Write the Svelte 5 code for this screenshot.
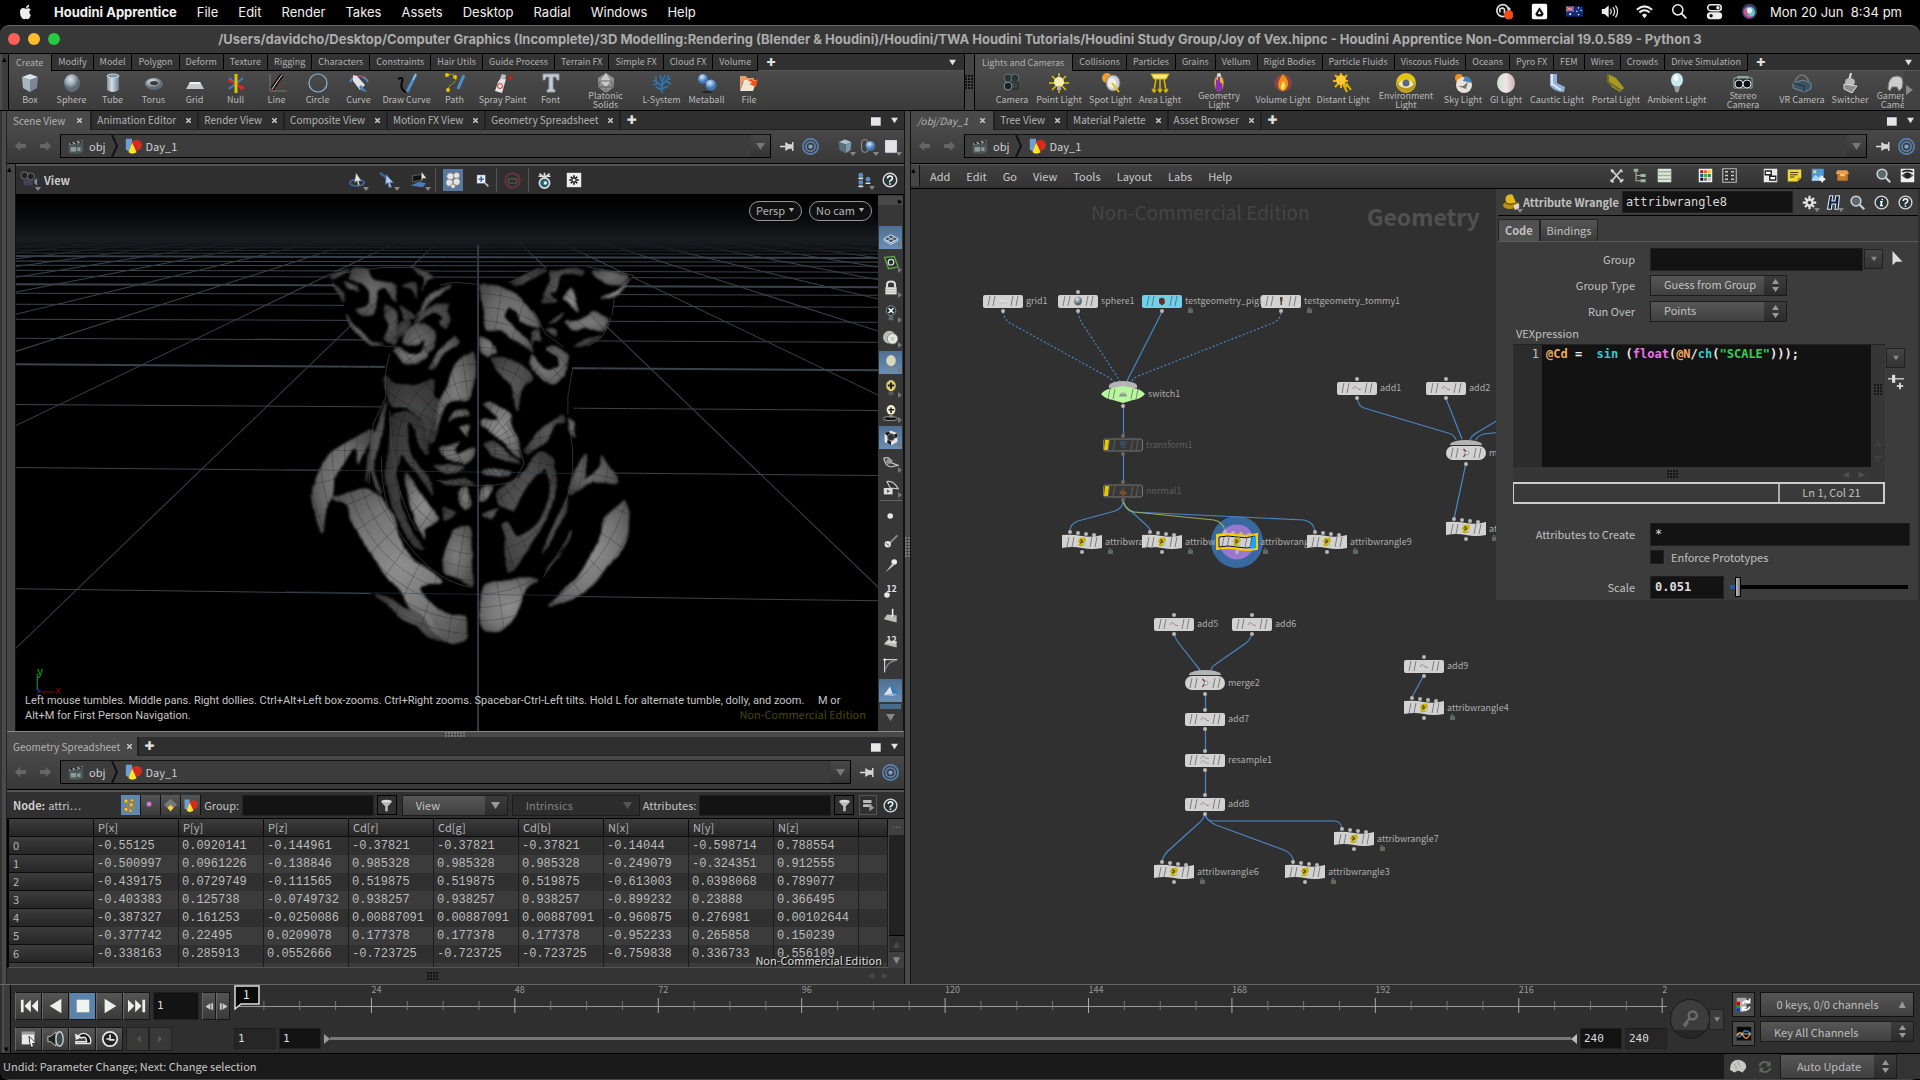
<script>
  const menus = ['File', 'Edit', 'Render', 'Takes', 'Assets', 'Desktop', 'Radial', 'Windows', 'Help']
  const networkMenus = ['Add', 'Edit', 'Go', 'View', 'Tools', 'Layout', 'Labs', 'Help']

  const shelfTabs = ['Create', 'Modify', 'Model', 'Polygon', 'Deform', 'Texture', 'Rigging', 'Characters', 'Constraints', 'Hair Utils', 'Guide Process', 'Terrain FX', 'Simple FX', 'Cloud FX', 'Volume']
  const lightTabs = ['Lights and Cameras', 'Collisions', 'Particles', 'Grains', 'Vellum', 'Rigid Bodies', 'Particle Fluids', 'Viscous Fluids', 'Oceans', 'Pyro FX', 'FEM', 'Wires', 'Crowds', 'Drive Simulation']

  // [label, icon, cell width]
  const shelfTools = [
    ['Box', 'box', 42], ['Sphere', 'sphere', 41], ['Tube', 'tube', 41], ['Torus', 'torus', 41],
    ['Grid', 'grid', 41], ['Null', 'nul', 41], ['Line', 'line', 41], ['Circle', 'circle', 41],
    ['Curve', 'curve', 41], ['Draw Curve', 'draw', 55], ['Path', 'path', 41], ['Spray Paint', 'spray', 55],
    ['Font', 'font', 41], ['Platonic Solids', 'platonic', 69], ['L-System', 'lsystem', 43],
    ['Metaball', 'metaball', 47], ['File', 'file', 38]
  ]
  const lightTools = [
    ['Camera', 'camera', 46], ['Point Light', 'point', 48], ['Spot Light', 'spot', 55], ['Area Light', 'area', 44],
    ['Geometry Light', 'geolight', 74], ['Volume Light', 'fire', 54], ['Distant Light', 'sun', 66],
    ['Environment Light', 'env', 60], ['Sky Light', 'sky', 54], ['GI Light', 'gi', 32],
    ['Caustic Light', 'caustic', 70], ['Portal Light', 'portal', 48], ['Ambient Light', 'bulb', 74],
    ['Stereo Camera', 'stereo', 58], ['VR Camera', 'vr', 60], ['Switcher', 'switcher', 36], ['Gamepad Camera', 'gamepad', 58]
  ]
  const twoLine = ['platonic', 'geolight', 'env', 'stereo', 'gamepad']

  const sceneTabs = ['Scene View', 'Animation Editor', 'Render View', 'Composite View', 'Motion FX View', 'Geometry Spreadsheet']
  const netTabs = ['/obj/Day_1', 'Tree View', 'Material Palette', 'Asset Browser']

  const columns = ['P[x]', 'P[y]', 'P[z]', 'Cd[r]', 'Cd[g]', 'Cd[b]', 'N[x]', 'N[y]', 'N[z]']
  const rows = [
    ['-0.55125', '0.0920141', '-0.144961', '-0.37821', '-0.37821', '-0.37821', '-0.14044', '-0.598714', '0.788554'],
    ['-0.500997', '0.0961226', '-0.138846', '0.985328', '0.985328', '0.985328', '-0.249079', '-0.324351', '0.912555'],
    ['-0.439175', '0.0729749', '-0.111565', '0.519875', '0.519875', '0.519875', '-0.613003', '0.0398068', '0.789077'],
    ['-0.403383', '0.125738', '-0.0749732', '0.938257', '0.938257', '0.938257', '-0.899232', '0.23888', '0.366495'],
    ['-0.387327', '0.161253', '-0.0250086', '0.00887091', '0.00887091', '0.00887091', '-0.960875', '0.276981', '0.00102644'],
    ['-0.377742', '0.22495', '0.0209078', '0.177378', '0.177378', '0.177378', '-0.952233', '0.265858', '0.150239'],
    ['-0.338163', '0.285913', '0.0552666', '-0.723725', '-0.723725', '-0.723725', '-0.759838', '0.336733', '0.556109']
  ]

  const viewTools = [
    ['plane', true], ['reference', false], ['lock', false], ['nolight', false], ['ghost', false], ['bulbOff', true],
    ['bulbPlus', false], ['bulbShadow', false], ['checker', true], ['eye', false], ['eyeCam', false]
  ]
  const displayTools = [
    ['dot', false], ['normalDot', false], ['pointTrail', false], ['num', false],
    ['primNormal', false], ['primNum', false], ['hull', false], ['backface', true]
  ]

  // Node positions on the network canvas
  const nodes = [
    { name: 'grid1', x: 1003, y: 301, icon: 'grid', noIn: true },
    { name: 'sphere1', x: 1078, y: 301, icon: 'sphere' },
    { name: 'testgeometry_pighead1', x: 1162, y: 301, icon: 'pig', fill: '#6fd0ea', noIn: true, lock: true },
    { name: 'testgeometry_tommy1', x: 1281, y: 301, icon: 'man', noIn: true, lock: true },
    { name: 'switch1', x: 1123, y: 394, icon: 'switch', kind: 'switch' },
    { name: 'transform1', x: 1123, y: 445, icon: 'transform', kind: 'bypass' },
    { name: 'normal1', x: 1123, y: 491, icon: 'normal', kind: 'bypass' },
    { name: 'attribwrangle1', x: 1082, y: 542, kind: 'wrangle' },
    { name: 'attribwrangle5', x: 1162, y: 542, kind: 'wrangle' },
    { name: 'attribwrangle8', x: 1237, y: 542, kind: 'wrangle', selected: true },
    { name: 'attribwrangle9', x: 1327, y: 542, kind: 'wrangle' },
    { name: 'add1', x: 1357, y: 388, icon: 'wave' },
    { name: 'add2', x: 1446, y: 388, icon: 'wave' },
    { name: 'merge1', x: 1466, y: 453, kind: 'merge' },
    { name: 'attribwrangle2', x: 1466, y: 529, kind: 'wrangle' },
    { name: 'add5', x: 1174, y: 624, icon: 'wave' },
    { name: 'add6', x: 1252, y: 624, icon: 'wave' },
    { name: 'merge2', x: 1205, y: 683, kind: 'merge' },
    { name: 'add7', x: 1205, y: 719, icon: 'wave' },
    { name: 'resample1', x: 1205, y: 760, icon: 'waves' },
    { name: 'add8', x: 1205, y: 804, icon: 'wave' },
    { name: 'attribwrangle7', x: 1354, y: 839, kind: 'wrangle' },
    { name: 'attribwrangle6', x: 1174, y: 872, kind: 'wrangle' },
    { name: 'attribwrangle3', x: 1305, y: 872, kind: 'wrangle' },
    { name: 'add9', x: 1424, y: 666, icon: 'wave' },
    { name: 'attribwrangle4', x: 1424, y: 708, kind: 'wrangle' }
  ]

  const dottedWires = [
    'M1003 312Q1004 319 1010 323L1106 376Q1112 379 1114 382',
    'M1078 312Q1079 318 1082 323L1120 381',
    'M1281 313Q1280 320 1273 323L1138 376Q1132 379 1132 382'
  ]
  const wires = [
    'M1162 312L1127 381', 'M1123.5 407V435', 'M1123.5 455V481',
    'M1123 501Q1123 508 1115 511L1078 521Q1070 524 1070 531',
    'M1123 501Q1125 509 1132 512L1144 523Q1150 528 1151 532',
    'M1123 501Q1126 511 1134 512L1304 520Q1314 522 1315 532',
    'M1357 397Q1358 406 1364 408L1448 433Q1455 435 1456 440',
    'M1446 398Q1447 402 1449 406L1462 439',
    'M1510 413L1478 432Q1471 436 1470 440', 'M1510 431L1484 434Q1477 436 1476 440',
    'M1466 463L1454 519',
    'M1174 633Q1175 638 1178 642L1196 665Q1199 668 1200 671',
    'M1252 633Q1251 639 1246 643L1216 664Q1211 667 1211 671',
    'M1205.5 694V711', 'M1205.5 727V752', 'M1205.5 769V796',
    'M1205 813Q1206 821 1213 821H1334Q1341 821 1342 829',
    'M1205 813Q1206 821 1216 825L1284 850Q1292 853 1294 862',
    'M1205 813Q1204 819 1199 823L1168 851Q1163 856 1162 862',
    'M1424 675L1412 697'
  ]

  const horizon = [
    [393, 405], [272, 280], [209, 215], [169, 175, 2], [143, 147], [124, 127], [109, 112], [98, 100], [89, 92, 2],
    [81, 83], [75, 77], [70, 71], [66, 67], [61, 63, 2], [58, 59], [55, 56], [52, 53], [50, 50], [47, 48]
  ]
  const rays = Array.from({ length: 24 }, (_, i) => i + 1)

  // Shaded stripes of the head: [brightness, outline points]
  const patches = [
    [6, '155 55 205 60 215 85 275 95 290 110 285 160 262 110 240 120 225 190 190 198 165 175 205 165 210 125 180 100 150 85'],
    [5, '255 160 290 190 300 265 285 285 250 275 268 225 250 200'],
    [6, '138 182 160 225 205 272 255 288 215 288 165 250 145 215'],
    [4, '85 76 150 58 125 75 100 85'], [4, '95 90 130 120 136 155 118 125'],
    [5, '330 52 375 60 400 80 378 85 365 130 372 85 350 65'],
    [5, '135 90 170 110 172 128 145 115'], [4, '300 110 345 100 352 150 335 120'],
    [6, '348 200 375 150 410 118 460 96 450 110 395 150 360 190'],
    [5, '345 235 360 190 400 165 450 165 440 180 455 215 430 238 415 215 435 205 400 185 370 195'],
    [4, '290 160 330 185 352 205 320 215'], [4, '300 215 340 215 330 240 300 262'],
    [6, '330 240 345 225 375 215 400 240 402 290 380 312 345 322 370 295 375 265 355 285 310 275'],
    [7, '275 300 300 285 325 312 350 318 382 305 375 325 345 345 305 340'],
    [6, '380 355 420 295 465 262 485 275 470 292 435 305 405 350'],
    [7, '405 550 410 480 445 390 490 320 522 302 520 420 505 445 450 450 425 480'],
    [4, '256 370 290 400 350 400 395 380 405 440 440 450 420 510 405 580 390 570 360 500 320 470 270 465 255 410'],
    [4, '270 490 330 485 360 510 390 570 395 615 350 570 330 515 320 540 330 600 385 700 395 740 340 660 300 600 290 660 300 760 340 850 375 900 340 880 290 800 258 700 262 580'],
    [7, '215 530 150 570 90 610 55 660 38 710 38 750 50 805 70 850 75 790 105 740 110 670 130 640 170 585 180 650 215 560'],
    [9, '90 742 200 710 245 745 280 790 300 860 340 930 430 990 420 1000 360 1010 380 1050 450 1095 500 1090 500 1165 440 1180 380 1110 330 1060 250 960 170 850 140 760'],
    [5, '215 1030 330 1070 400 1090 445 1180 340 1125'],
    [5, '200 705 213 560 262 435 230 590 218 650 245 740 228 720 212 650'],
    [8, '315 660 350 710 385 770 425 805 375 840 375 870 350 820 325 740'],
    [7, '465 830 512 825 517 1010 470 980 420 960 440 880'],
    [6, '445 520 470 475 500 470 512 495 470 500'], [7, '478 530 510 520 505 560'],
    [7, '420 590 480 570 458 595 468 615 520 588 515 620 495 645 440 625'],
    [5, '395 650 450 640 500 655 440 672'], [4, '410 695 500 682 525 700 450 704'],
    [7, '480 715 500 705 520 760 495 780 475 755'], [4, '425 770 470 790 440 812'],
    [7, '540 105 590 105 650 130 690 170 725 230 690 225 660 210 650 180 620 165 605 200 640 230 680 270 700 310 640 270 600 235 560 240 545 170'],
    [7, '540 255 570 270 590 300 560 320 540 305'],
    [5, '570 320 610 310 700 385 665 410 650 490 635 400 590 350'],
    [7, '690 310 680 350 750 405 800 365 800 310 770 290 740 300 770 320 775 350 740 358'],
    [4, '630 95 700 60 740 60 650 110'],
    [5, '740 60 850 58 850 80 780 70 770 120 745 130 775 155 720 160 750 90'],
    [8, '785 145 815 112 842 188 810 165'], [6, '870 55 990 72 960 100 920 98 885 80'],
    [9, '895 150 950 112 990 80 940 142'], [7, '790 208 850 205 880 183 930 205 905 250 850 230 830 240'],
    [5, '745 225 792 185 772 215'], [5, '735 235 775 240 775 265'],
    [5, '690 240 712 230 725 275 700 262 688 290'], [4, '810 285 860 270 910 258 860 286'],
    [8, '548 455 575 450 635 490 635 525 655 570 670 630 600 570 570 535 545 525 545 508 600 508'],
    [5, '545 580 580 570 600 590 670 640 610 630 570 620'],
    [6, '545 650 630 665 620 685 550 672'], [7, '540 708 585 705 560 745 540 748'],
    [5, '675 600 710 550 745 515 790 490 795 520 760 520 740 570 690 612'],
    [6, '805 500 830 515 832 560 812 545'],
    [5, '590 720 660 680 720 600 765 620 770 690 745 790 700 870 640 960 615 968 615 870 600 825 625 815 650 860 710 825 735 770 750 690 740 650 700 680 660 740 640 785 600 765'],
    [6, '800 745 830 650 855 610 860 680 845 690 870 680 900 650 903 605 955 705 870 695'],
    [9, '970 740 985 790 985 860 890 1000 850 1030 730 1075 850 960 915 800'],
    [9, '540 1000 600 990 720 985 680 1020 655 1090 605 1145 540 1140'],
    [5, '726 980 780 910 812 832 812 858'], [5, '545 790 600 770 570 812'],
    [5, '800 740 795 790 745 890 720 915 770 810']
  ]

  // Closed outline with its corners rounded off
  function smooth(points) {
    const n = points.split(' ').map(Number)
    const p = []
    for (let i = 0; i < n.length; i += 2) p.push([n[i], n[i + 1]])
    const near = (a, b, t) => `${a[0] + (b[0] - a[0]) * t} ${a[1] + (b[1] - a[1]) * t}`
    let d = ''
    p.forEach((pt, i) => {
      const prev = p[(i + p.length - 1) % p.length]
      const next = p[(i + 1) % p.length]
      d += `${i ? 'L' : 'M'}${near(pt, prev, 0.25)}Q${pt[0]} ${pt[1]} ${near(pt, next, 0.25)}`
    })
    return d + 'Z'
  }

  const meshRings = [60, 110, 160, 210, 260, 310, 350, 390, 430, 470, 510, 550]
  const meshSpokes = Array.from({ length: 36 }, (_, i) => (i * Math.PI) / 18)

  const ticks = []
  for (let f = 6; f <= 240; f += 6) ticks.push(f)
  const framePos = (f) => `${(f - 1) * 0.417}%`

  const icons = {
    box: '<path d="M2 4l8-3 8 3-8 3z" fill="#dde5ec"/><path d="M2 4l8 3v12l-7-4z" fill="#a9b6c1"/><path d="M18 4l-8 3v12l7-4z" fill="#7b8893"/>',
    sphere: '<ellipse cx="10" cy="10" rx="8" ry="9" fill="url(#ball)"/>',
    tube: '<path d="M4 3v14q6 4 12 0V3z" fill="url(#tubeg)"/><ellipse cx="10" cy="3" rx="6" ry="2" fill="#7d97ab" stroke="#cfdae2"/>',
    torus: '<ellipse cx="10" cy="11" rx="9" ry="6" fill="url(#ball)"/><ellipse cx="10" cy="10" rx="4" ry="2" fill="#3a3a3a"/>',
    grid: '<path d="M5 9h10l4 7H1z" fill="#c3cad0"/><path d="M5 9h10l1 2H4z" fill="#eef1f3"/>',
    plane: '<path d="M10 6l9 5-9 5-9-5z" fill="#3f566b" stroke="#dfe6ea" stroke-width="1.2"/><path d="M5.500 8.500l9 5M14.500 8.500l-9 5M1 13l9 5 9-5" stroke="#dfe6ea" fill="none"/>',
    nul: '<path d="M3 5l14 11M17 5L3 16" stroke="#3b7fc4" stroke-width="2"/><path d="M2 7l16 8M18 15l-4 1" stroke="#d22" stroke-width="2"/><path d="M10 1v19" stroke="#d8c400" stroke-width="3"/>',
    line: '<path d="M3 1v17h17" stroke="#777" fill="none"/><path d="M5 16L15 2" stroke="#111" stroke-width="4"/><path d="M5 16L15 2" stroke="#ddd"/><path d="M8 6l8 11M3 19l5-5" stroke="#b22" stroke-dasharray="2 1"/>',
    circle: '<ellipse cx="10" cy="10" rx="9" ry="9" fill="none" stroke="#8fb3d9" stroke-width="1.2"/>',
    curve: '<path d="M1 9q3-6 9-6t9 6" stroke="#5a9ad8" stroke-width="1.5" fill="none"/><path d="M2 3h16" stroke="#b22"/><path d="M4 2l4 1 8 9-5 5-7-9z" fill="#dfe3e6"/><path d="M12 12l6 7-5-1-3-4z" fill="#4b80b5"/>',
    draw: '<path d="M1 6q6-3 4 3t2 9q2 2 5-2" stroke="#080808" stroke-width="2" fill="none"/><path d="M19 1l-8 16-1 2" stroke="#4f8fc8" stroke-width="3"/><path d="M19 1l-3 6" stroke="#bcd8ee"/>',
    path: '<path d="M1 2q10-2 10 3T4 13l-1 5" stroke="#c8a800" fill="none" stroke-dasharray="2 1"/><circle cx="2" cy="2" r="2" fill="#e8c600"/><circle cx="10" cy="4" r="2" fill="#e8c600"/><circle cx="3" cy="17" r="2" fill="#e8c600"/><path d="M19 2l-6 14" stroke="#4f8fc8" stroke-width="3"/>',
    spray: '<path d="M8 5l5 1-4 14-7-2 3-9z" fill="#e8e4e2"/><path d="M9 1l4 1-1 5-5-2z" fill="#bbb"/><circle cx="7" cy="13" r="2.5" fill="none" stroke="#c33"/><path d="M14 4l6-2-1 6z" fill="#b22"/>',
    font: '<path d="M2 1h16v6h-2l-1-3h-3v12l2 1v2H6v-2l2-1V4H5L4 7H2z" fill="#c3ccd5" stroke="#8e99a4"/>',
    platonic: '<path d="M10 0l8 5v9l-8 6-8-6V5z" fill="#8d8f8e"/><path d="M10 0l5 8-5 6-6-6z" fill="#c9cbca"/><path d="M10 14l8 0M10 14l-8 0M10 14v6M4 8L2 14M15 8l3 6M4 8h11" stroke="#60635f" fill="none"/>',
    lsystem: '<path d="M10 20V9M10 14L4 8M10 12l6-6M10 9L8 2M10 10l3-8M4 8L1 8M4 8L4 3M16 6h3M16 6l0-4M6 10L2 12M14 8l5 3M10 16l6-3M10 17l-6-3" stroke="#2d77bd" stroke-width="1.5" fill="none"/>',
    metaball: '<circle cx="6" cy="6" r="5" fill="url(#blue)"/><circle cx="14" cy="12" r="5.5" fill="url(#blue)"/><ellipse cx="10" cy="19" rx="5" ry="1" fill="#222"/>',
    file: '<path d="M1 3h6l1 2h7v3H4L1 18z" fill="#e8a064"/><path d="M5 7h13l-4 11H1z" fill="#f4e4d4"/><path d="M9 8q4-4 6 0l4-2-2 8-7-3 3-1q-1-2-4-2z" fill="#f05510"/>',
    camera: '<circle cx="6" cy="5" r="4" fill="#2a3236" stroke="#65757a"/><circle cx="13" cy="5" r="4" fill="#2a3236" stroke="#65757a"/><path d="M5 9h11v7H5z" fill="#39454a" stroke="#222"/><circle cx="6" cy="13" r="4" fill="#1b2225" stroke="#84949a"/>',
    point: '<path d="M10 0v20M0 10h20M3 3l14 14M17 3L3 17" stroke="#e0c200" stroke-width="1.5"/><circle cx="10" cy="9" r="5" fill="#f6f0b0"/><path d="M8 13h4v4H8z" fill="#aaa"/>',
    spot: '<circle cx="6" cy="5" r="5" fill="#f39a2c"/><ellipse cx="12" cy="10" rx="7" ry="8" fill="#cfcfcf" stroke="#777"/><ellipse cx="11" cy="10" rx="4" ry="5" fill="#eee"/><path d="M11 10l7 9" stroke="#e0c200" stroke-width="2"/>',
    area: '<path d="M1 1h18l-3 5H4z" fill="#f3e48a" stroke="#d7b400"/><path d="M6 6L4 18M10 6v13M14 6l2 12M2 16l2 3 2-2M8 16l2 3 2-3M14 17l2 2 2-3" stroke="#dcb800" fill="none" stroke-width="1.5"/>',
    geolight: '<ellipse cx="10" cy="10" rx="5" ry="8" fill="#9b8060"/><ellipse cx="10" cy="9" rx="4" ry="5" fill="#e8c020"/><path d="M10 1v18M8 8l4 3v5H8z" stroke="#8b2fb0" stroke-width="2" fill="#8b2fb0"/><circle cx="10" cy="2" r="2" fill="#ddd"/>',
    fire: '<circle cx="10" cy="10" r="9" fill="#b44" opacity=".5"/><path d="M10 1q6 6 5 11t-5 6q-5-1-5-6t5-11z" fill="#f28a1c"/><path d="M10 8q3 3 2 6t-2 3q-3-1-2-4z" fill="#fce45a"/>',
    sun: '<path d="M8 0v15M0 8h15M2 2l12 12M14 2L2 14" stroke="#f0b000" stroke-width="2"/><circle cx="8" cy="7" r="5" fill="#ffc933"/><path d="M10 11l4 8M13 10l5 7" stroke="#e0b400" stroke-width="2"/>',
    env: '<circle cx="10" cy="10" r="10" fill="#e3c613"/><path d="M1 9h18v6q-9 8-18 0z" fill="#b89c20"/><path d="M2 11q8-9 16 0-8 8-16 0z" fill="#efe9c8"/><circle cx="10" cy="10" r="3.5" fill="#5c6a74"/>',
    sky: '<circle cx="6" cy="5" r="4" fill="#f08f1c"/><circle cx="11" cy="12" r="8" fill="#e9e2da"/><path d="M12 3q5 0 7 7l-9-2z" fill="#4a80b8"/><path d="M5 13h5l5-4-2 7z" fill="#777"/>',
    gi: '<ellipse cx="10" cy="10" rx="9" ry="10" fill="url(#gig)"/>',
    caustic: '<path d="M3 1h7v9l8 4-1 5q-9 0-14-6z" fill="#8fb0dc"/><path d="M5 1v10l9 6" stroke="#dce8f6" stroke-width="2" fill="none"/>',
    portal: '<path d="M2 1l8 4 8 10-4 4-8-5-4-5z" fill="#a89a20"/><path d="M2 1v8l14 9" stroke="#6c6a2a" stroke-width="2" fill="none"/>',
    bulb: '<ellipse cx="10" cy="7" rx="6" ry="7" fill="#c6e8ee"/><path d="M7 13h6l-1 5q-2 3-4 0z" fill="#9a9a9a"/><ellipse cx="9" cy="5" rx="2" ry="3" fill="#fff"/>',
    stereo: '<path d="M1 5h18v10H1z" fill="#2b2f31" stroke="#9aa"/><circle cx="6" cy="11" r="4" fill="#0f1214" stroke="#dde"/><circle cx="14" cy="11" r="4" fill="#0f1214" stroke="#dde"/><path d="M4 3h12v2H4z" fill="#8a9"/>',
    vr: '<path d="M3 8q7-12 14 0" fill="none" stroke="#777" stroke-width="1.5"/><path d="M1 10l10-3 8 3v6l-7 3-11-4z" fill="#3c5567" stroke="#73899a"/><path d="M1 10l11 3v6" fill="none" stroke="#1d2b35"/>',
    switcher: '<path d="M11 0L9 8" stroke="#ddd" stroke-width="2"/><ellipse cx="10" cy="9" rx="5" ry="4" fill="#b9b9b9"/><path d="M4 11l13 2-5 7-8-4z" fill="#8e8e8e" stroke="#ddd"/>',
    gamepad: '<path d="M10 3q8 0 5 12l-3 3-2-4H5l-2 4-2-2Q1 3 10 3z" fill="#ccc" stroke="#777"/>',
    obj: '<path d="M2 7h16v10q-8 3-16 1z" fill="#4b5657"/><path d="M2 7l15-4v3L3 9z" fill="#8b9494"/><path d="M4 6l2 2M9 5l2 2M14 4l2 2" stroke="#222" stroke-width="2"/><path d="M4 11h6v5H4zM11 12l4-1v5l-4-1z" fill="#8c9a9a"/>',
    geo: '<path d="M2 2h7v13q-4 2-7-1z" fill="#6f9fd0"/><circle cx="14" cy="9" r="6" fill="#d22b1f"/><path d="M9 6l5 11q-5 3-9 0z" fill="#ffe32b"/>',
    left: '<path d="M1 10l8-7v4h8v6H9v4z" fill="#666"/>',
    right: '<path d="M19 10l-8-7v4H3v6h8v4z" fill="#666"/>',
    pin: '<path d="M0 10h7" stroke="#ddd" stroke-width="2"/><path d="M7 4v12l5-3h4V7h-4zM16 4v12h2V4z" fill="#d4d4d4"/>',
    target: '<circle cx="10" cy="10" r="9" fill="none" stroke="#5682b4" stroke-width="2"/><circle cx="10" cy="10" r="5.5" fill="none" stroke="#6a97c8" stroke-width="1.5"/><circle cx="10" cy="10" r="2.5" fill="#76a6de"/>',
    cube: '<path d="M2 5l8-3 8 3-7 3z" fill="#a8c4ce"/><path d="M2 5l9 3v11l-8-4z" fill="#58707c"/><path d="M18 5l-7 3v11l6-4z" fill="#7f99a4"/>',
    balls: '<rect x="2" y="2" width="8" height="16" rx="4" fill="none" stroke="#aaa"/><circle cx="13" cy="10" r="6" fill="url(#blue)"/>',
    square: '<path d="M2 2h16v17H2z" fill="#e3e3e6" stroke="#2b2b44"/>',
    window: '<path d="M3 1h15v4H3z" fill="#26263f"/><path d="M3 5h15v13H3z" fill="#e6e6e2"/>',
    viewcam: '<circle cx="5" cy="5" r="4" fill="#222" stroke="#778"/><circle cx="12" cy="6" r="4" fill="#222" stroke="#778"/><path d="M4 10h10v6H4z" fill="#445"/><path d="M16 10l3-2v8l-3-2z" fill="#889"/>',
    orbit: '<ellipse cx="10" cy="13" rx="8" ry="3.500" fill="none" stroke="#3f6ba5" stroke-width="1.800"/><path d="M9 2l6 9-3 0 1 5-2 0-1-5-3 2z" fill="#e4e4e4" stroke="#444" stroke-width=".5"/>',
    arrow: '<path d="M1 2l12 9" stroke="#3f6ba5" stroke-width="2.500"/><path d="M8 4l8 9-4 0 2 5-3 0-1-5-3 2z" fill="#b9cde6" stroke="#3f6ba5"/>',
    render: '<path d="M3 5l10-1v6l-10 2z" fill="#111" stroke="#666"/><path d="M1 16l9-4 8 2-4 4z" fill="#4a7cbb"/><path d="M13 1l5 7h-4l-1 4z" fill="#e4e4e4"/>',
    flower: '<g fill="#e4e4e4" stroke="#6a6a6a" stroke-width=".7"><circle cx="7" cy="6" r="4"/><circle cx="14" cy="5" r="3.5"/><circle cx="6" cy="13" r="4"/><circle cx="14" cy="12" r="4"/><circle cx="10" cy="17" r="2.5"/></g>',
    zoombox: '<path d="M1 1h14v14H1z" fill="#e8eef4" stroke="#223"/><path d="M4 8h8M8 4v8" stroke="#3566b0" stroke-width="2.500"/><path d="M14 14l5 5" stroke="#bbb" stroke-width="2.500"/>',
    stop: '<circle cx="10" cy="10" r="8.5" fill="none" stroke="#6a3436" stroke-width="2.5"/><path d="M5 8h10v5H5z" fill="none" stroke="#666"/>',
    compass: '<circle cx="10" cy="13" r="6" fill="#2a6470" stroke="#ddd" stroke-width="2"/><path d="M10 8V1M4 2l5 4M16 2l-5 4M3 5h14" stroke="#ddd" stroke-width="2"/><circle cx="11" cy="13" r="2" fill="#e8f4f8"/>',
    gearbox: '<path d="M1 1h18v18H1z" fill="#eee"/><path d="M10 4v12M4 10h12M6 6l8 8M14 6l-8 8" stroke="#111" stroke-width="2"/><circle cx="10" cy="10" r="2" fill="#eee"/>',
    people: '<g fill="#5a8cc4"><circle cx="6" cy="4" r="3"/><circle cx="6" cy="13" r="3"/><circle cx="15" cy="9" r="3"/></g><path d="M3 8h6M3 18h6M12 14h6" stroke="#ddd" stroke-width="2"/>',
    help: '<circle cx="10" cy="10" r="8.5" fill="#26363a" stroke="#d8d8d8" stroke-width="1.8"/><path d="M7 8q0-3 3-3t3 3q0 1-2 2.500t-1 2M10 14v2" stroke="#fff" stroke-width="2" fill="none"/>',
    info: '<circle cx="10" cy="10" r="8.500" fill="#26363a" stroke="#d8d8d8" stroke-width="1.8"/><path d="M8 9h2.500l-1.500 5h3M11 5v2" stroke="#fff" stroke-width="2" fill="none"/>',
    tools: '<path d="M3 2l14 16M17 2L3 18" stroke="#ccc" stroke-width="2.500"/><path d="M2 2l5 1-3 4zM14 1l5 4-2 1z" fill="#ddd"/><path d="M2 16l4 3M15 19l4-4" stroke="#ccc" stroke-width="3"/>',
    tree: '<path d="M4 3v14h8M4 10h8" stroke="#aaa" fill="none" stroke-width="1.500"/><path d="M1 1h6v4H1zM10 8h7v4h-7zM10 15h7v4h-7z" fill="#9db59d"/>',
    list: '<path d="M1 1h18v18H1z" fill="#dfe7da"/><path d="M1 5h18M1 10h18M1 15h18" stroke="#9fb39a" stroke-width="2"/>',
    palette: '<path d="M1 1h18v18H1z" fill="#f2f2f2"/><path d="M3 3h4v4H3z" fill="#a11"/><path d="M8 3h4v4H8z" fill="#e63"/><path d="M13 3h4v4h-4z" fill="#fb2"/><path d="M3 8h4v4H3z" fill="#15a"/><path d="M8 8h4v4H8z" fill="#4b2"/><path d="M13 8h4v4h-4z" fill="#284"/><path d="M3 13h4v4H3z" fill="#111"/><path d="M8 13h4v4H8z" fill="#777"/><path d="M13 13h4v4h-4z" fill="#bbb"/>',
    dots: '<path d="M1 1h18v18H1z" fill="#333" stroke="#bbb" stroke-width="1.500"/><path d="M4 5h4M12 5h4M4 10h4M12 10h4M4 15h4M12 15h4" stroke="#ccc" stroke-width="2"/>',
    netbox: '<path d="M1 1h18v18H1z" fill="#e8ece8"/><path d="M3 4h8v5H3zM9 11h8v5H9z" fill="#fff" stroke="#222" stroke-width="1.800"/>',
    note: '<path d="M1 2h18v11l-5 5H1z" fill="#f0d83c"/><path d="M4 6h11M4 9h10M4 12h6" stroke="#443a00" stroke-width="1.500"/><path d="M14 18v-5h5z" fill="#b89a10"/>',
    picture: '<path d="M1 1h16v16H1z" fill="#4f9ad8"/><path d="M1 15l5-6 4 4 3-4 4 5v3H1z" fill="#a8d8f0"/><circle cx="5" cy="5" r="2" fill="#ffe14a"/><path d="M15 11v8M11 15h8" stroke="#fff" stroke-width="2.500"/>',
    boxes: '<path d="M3 3h13l3 5H1z" fill="#e8a050"/><path d="M3 8h14v9H3z" fill="#c97a28"/><path d="M7 8h6v3H7z" fill="#f4c88a"/>',
    search: '<circle cx="8" cy="8" r="6.500" fill="#5a6a70" stroke="#cfd4d4" stroke-width="2"/><path d="M13 13l6 6" stroke="#cfcfcf" stroke-width="3"/>',
    eyebox: '<path d="M1 1h18v18H1z" fill="#eee"/><path d="M2 10q8-8 16 0-8 8-16 0z" fill="#555"/><circle cx="10" cy="10" r="4" fill="#222"/><path d="M3 5q7-3 14 0" stroke="#222" stroke-width="2" fill="none"/>',
    gear: '<path d="M10 1v18M1 10h18M4 4l12 12M16 4L4 16" stroke="#e4e4e4" stroke-width="3"/><circle cx="10" cy="10" r="5.500" fill="#e4e4e4"/><circle cx="10" cy="10" r="2.500" fill="#444"/>',
    hlogo: '<path d="M5 1h4L8 8h4l1-7h5l-2 18h-4l1-7H8l-1 7H2z" fill="#0b1f44" stroke="#dfe6f0" stroke-width="1.500"/>',
    hat: '<path d="M1 13q3-4 6-2 6-2 12 0 1 4-4 5-6 3-11 1-3-1-3-4z" fill="#c08f10"/><path d="M5 11Q2 4 7 2q5-2 6 3l3 6q-6 3-11 0z" fill="#e0bb1c"/><path d="M4 11q6 3 12 0" stroke="#6c5200" fill="none" stroke-width="1.500"/><path d="M13 13l6-1v5l-5 2z" fill="#d8d8d8"/>',
    cursor: '<path d="M5 1l11 12h-7l-4 4z" fill="#ddd"/>',
    sliders: '<path d="M0 6h20" stroke="#bbb" stroke-width="2"/><path d="M5 1h4v10H5z" fill="#ddd"/><path d="M15 11v8M11 15h8" stroke="#eee" stroke-width="2"/>',
    reference: '<path d="M2 3l12-1 5 13-12 2z" fill="#26331f" stroke="#5ea24c" stroke-width="1.800"/><circle cx="10" cy="9" r="3.500" fill="none" stroke="#dde" stroke-width="1.500"/>',
    lock: '<path d="M5 9V6q0-4 5-4t5 4v3" stroke="#ddd" stroke-width="2.500" fill="none"/><path d="M3 9h14v9H3z" fill="#e4e4dc"/><path d="M3 12h14M3 15h14" stroke="#aaa"/>',
    nolight: '<circle cx="10" cy="7" r="6" fill="#1c2a2c" stroke="#9ab"/><path d="M7 4l6 6M13 4l-6 6" stroke="#fff" stroke-width="2"/><path d="M7 14h6v5H7z" fill="#5a6a6a"/>',
    ghost: '<circle cx="8" cy="9" r="8" fill="#b8bcb4"/><circle cx="12" cy="11" r="6.500" fill="#e8eae4" stroke="#7c807a"/><circle cx="12" cy="11" r="3" fill="#c8ccc4"/>',
    bulbOff: '<ellipse cx="10" cy="7" rx="6" ry="7" fill="#d8d6bc"/><path d="M7 14h6v5H7z" fill="#7f8486"/>',
    bulbPlus: '<ellipse cx="10" cy="7" rx="6" ry="7" fill="#dccf70"/><path d="M7 14h6v5H7z" fill="#5a5a5a"/><path d="M10 3v8M6 7h8" stroke="#222" stroke-width="2.500"/>',
    bulbShadow: '<ellipse cx="9" cy="17" rx="9" ry="2.500" fill="#111" stroke="#bbb"/><ellipse cx="10" cy="6" rx="5.500" ry="6" fill="#f4f0c8"/><path d="M8 12h4v4H8z" fill="#888"/><path d="M10 3v7M7 6h7" stroke="#222" stroke-width="2"/>',
    checker: '<path d="M2 4l8-3 8 3v11l-8 4-8-4z" fill="#e6e6e6"/><path d="M2 4l5-2 3 3-4 3zM18 4l-5 2 0 5 5-2zM6 12l4 2v5l-5-3z" fill="#15191c"/><circle cx="10" cy="9" r="4.500" fill="#2c3338" stroke="#888"/>',
    eye: '<path d="M1 4q8-3 10 6l8 3-9 2Q3 14 1 4z" fill="#3a3a3a" stroke="#c9c9c9" stroke-width="1.500"/><ellipse cx="8" cy="8" rx="4" ry="3" fill="#999"/>',
    eyeCam: '<path d="M5 2q8-2 14 9l-10-1z" fill="#333" stroke="#c9c9c9" stroke-width="1.500"/><path d="M1 10h11v8H1z" fill="#ddd"/><path d="M5 12v4l4-2z" fill="#555"/>',
    dot: '<circle cx="9" cy="10" r="3.500" fill="#e8e8e8"/>',
    normalDot: '<path d="M18 3L8 13" stroke="#7f8b92" stroke-width="2.500"/><circle cx="6" cy="14" r="4" fill="#e0e0e0"/><path d="M4 13l4 3" stroke="#444"/>',
    pointTrail: '<circle cx="14" cy="5" r="3.500" fill="#eee"/><path d="M12 6L3 18l11-9z" fill="#bbb"/>',
    num: '<text x="4" y="11" font-size="11" font-weight="bold" fill="#e6e6e6">12</text><circle cx="5" cy="15" r="3.500" fill="#e6e6e6"/>',
    primNormal: '<path d="M5 8l12 1 0 9L1 14z" fill="#bdbfb8"/><path d="M12 1v12" stroke="#eee" stroke-width="2"/><path d="M12 13l5-6" stroke="#555"/>',
    primNum: '<path d="M5 9l12 1 0 8L1 14z" fill="#bdbfb8"/><text x="4" y="12" font-size="11" font-weight="bold" fill="#e6e6e6">12</text>',
    hull: '<path d="M2 2v16M2 2h16" stroke="#ccc" stroke-width="1.500"/><path d="M3 15Q5 5 16 3" stroke="#7f9299" fill="none" stroke-width="1.500"/><circle cx="2" cy="2" r="1.500" fill="#fff"/>',
    backface: '<path d="M1 15L9 4l4 12z" fill="#d8e2ea"/><path d="M9 4l4-2 6 12-6 2z" fill="#3d7ab8"/><path d="M1 15l12 1 6-2-8-1z" fill="#9fb8cc"/>',
    points: '<path d="M4 5l8-3 5 5-1 8-8 3-5-4z" fill="#7e8a80"/><g fill="#ffc72e" stroke="#8a6000" stroke-width=".6"><circle cx="4" cy="4" r="2.500"/><circle cx="12" cy="3" r="2"/><circle cx="4" cy="15" r="2.500"/><circle cx="11" cy="9" r="2.500"/><circle cx="10" cy="17" r="2"/></g>',
    vert: '<circle cx="8" cy="8" r="3.500" fill="#c58ac8" stroke="#7c4a80"/>',
    prim: '<path d="M10 1l9 8-9 8-9-8z" fill="#777"/><path d="M10 9l4 4-4 5-4-5z" fill="#ffd23a"/>',
    funnel: '<ellipse cx="10" cy="4" rx="8" ry="3" fill="#ddd"/><path d="M2 5l6 6v8h4v-8l6-6z" fill="#bbb"/>',
    stack: '<path d="M3 3h12v4H3zM3 9h12v4H3z" fill="#bbb"/><path d="M12 9l7 5-7 5z" fill="#999"/>',
    first: '<path d="M1 3h3v14H1zM12 3v14l-7-7zM20 3v14l-7-7z" fill="#eef0ea"/>',
    rev: '<path d="M16 2v16L3 10z" fill="#eef0ea"/>',
    stopbtn: '<path d="M3 3h14v14H3z" fill="#f0f2ec"/>',
    play: '<path d="M4 2v16l13-8z" fill="#eef0ea"/>',
    last: '<path d="M16 3h3v14h-3zM0 3v14l7-7zM8 3v14l7-7z" fill="#eef0ea"/>',
    stepb: '<path d="M12 3v14L1 10zM14 3h4v14h-4z" fill="#ccc"/>',
    stepf: '<path d="M8 3v14l11-7zM2 3h4v14H2z" fill="#ccc"/>',
    panel: '<path d="M2 2h14v14H2z" fill="#e8e8e8"/><path d="M2 2h14v3H2z" fill="#999"/><path d="M10 7l8 8-4 0 1 4-3 0-1-4z" fill="#fff" stroke="#222"/>',
    speaker: '<path d="M1 7h3l6-5v16l-6-5H1z" fill="#222" stroke="#ccc"/><ellipse cx="14" cy="10" rx="4" ry="8" fill="#3a4a50" stroke="#ccc" stroke-width="1.500"/>',
    loop: '<path d="M4 7q6-6 12-1 4 4 2 9H2v-2h12q0-7-6-4z" fill="#111" stroke="#e8e8e8" stroke-width="1.500"/><path d="M1 4l1 7 7-3z" fill="#e8e8e8"/>',
    clock: '<circle cx="10" cy="10" r="8" fill="#222" stroke="#e8e8e8" stroke-width="2"/><path d="M10 5v6h5M6 10h3" stroke="#e8e8e8" stroke-width="1.800" fill="none"/>',
    prevkey: '<path d="M3 3h3v14H3z" fill="#27482b"/><path d="M15 4v12l-7-6z" fill="#555"/>',
    nextkey: '<path d="M14 3h3v14h-3z" fill="#27482b"/><path d="M5 4v12l7-6z" fill="#555"/>',
    key: '<circle cx="13" cy="6" r="4.500" fill="none" stroke="#6d6d6d" stroke-width="2.500"/><path d="M10 9l-7 8M5 14l3 2M3 17l3 1" stroke="#6d6d6d" stroke-width="2.500"/>',
    keyset: '<path d="M1 1h12v17H1z" fill="#aaa"/><path d="M1 6h4v4H1z" fill="#c00"/><path d="M1 10h4v4H1z" fill="#0a0"/><path d="M1 14h4v4H1z" fill="#03c"/><path d="M16 6a5 5 0 0 0-8 3M8 14a5 5 0 0 0 9-2M17 2v5h-5M8 18v-5h5" stroke="#fff" stroke-width="2" fill="none"/>',
    wavebox: '<path d="M1 1h18v17H1z" fill="#080808"/><path d="M1 11q3 5 6 0t5-5 6 3" stroke="#3d86c6" stroke-width="1.800" fill="none"/><path d="M1 12q4-8 8 0t9-3" stroke="#e08a28" stroke-width="1.800" fill="none"/><path d="M1 10h18" stroke="#ddd"/>',
    brain: '<path d="M1 13Q1 2 11 2q9 2 8 9l-4 5-5-2-4 2z" fill="#c8c8c4"/><path d="M5 6q4 3 3 7M10 3q-1 4 3 7" stroke="#999" fill="none"/>',
    refresh: '<path d="M3 9q2-6 9-5l3 2M17 11q-2 6-9 5l-3-2" stroke="#606560" stroke-width="2.500" fill="none"/><path d="M17 2v7h-6zM3 18v-7h6z" fill="#606560"/>',
    apple: '<path d="M14 1q0 4-4 4 0-3 4-4zM10 6q3-2 6 1-4 3 0 7-2 5-4 5-2-1-4 0-3 0-5-5-2-8 3-9 2 0 4 1z" fill="#eee"/>',
    cc: '<circle cx="8" cy="9" r="7" fill="none" stroke="#ddd" stroke-width="2"/><path d="M5 11q-2-5 2-5t3 4 4 0-1-4" stroke="#ddd" stroke-width="2" fill="none"/><circle cx="15" cy="14" r="5.500" fill="#f34b1b"/>',
    drive: '<rect x="1" y="1" width="18" height="18" rx="2" fill="#fff"/><path d="M10 5l5 8-2 3H7l-2-3z" fill="#111"/><path d="M10 9l2 4H8z" fill="#fff"/>',
    flag: '<path d="M0 4h20v12H0z" fill="#102a80"/><path d="M0 4h9v6H0z" fill="#26479c"/><path d="M0 4l9 6M9 4l-9 6M4.500 4v6M0 7h9" stroke="#e88" stroke-width="1.200"/><path d="M4 12h2v2H4zM14 5h1.500v1.500H14zM17 8h1.500v1.500H17zM12 9h1.500v1.500H12zM14 13h1.500v1.500H14z" fill="#fff"/>',
    volume: '<path d="M1 7h3l5-4v14l-5-4H1z" fill="#eee"/><path d="M11 7q2 3 0 6M14 5q4 5 0 10M17 3q5 7 0 14" stroke="#ddd" stroke-width="1.500" fill="none"/>',
    wifi: '<path d="M1 8q9-8 18 0M4 11q6-5 12 0" stroke="#eee" stroke-width="2.500" fill="none"/><path d="M7 14q3-3 6 0l-3 4z" fill="#eee"/>',
    spotlight: '<circle cx="8" cy="8" r="6" fill="none" stroke="#eee" stroke-width="1.800"/><path d="M12 12l6 6" stroke="#eee" stroke-width="2"/>',
    control: '<rect x="2" y="2" width="16" height="7" rx="3.500" fill="none" stroke="#eee" stroke-width="1.800"/><circle cx="14" cy="5.500" r="2" fill="#eee"/><rect x="1" y="11" width="18" height="8" rx="4" fill="#eee"/><circle cx="6" cy="15" r="2" fill="#111"/>',
    siri: '<circle cx="10" cy="10" r="9" fill="#34406c"/><path d="M3 8q7-8 12-1t-5 11Q2 16 3 8z" fill="#d0508c"/><path d="M6 6q9-4 10 4t-7 5z" fill="#5cc8c8"/><circle cx="10" cy="9" r="3" fill="#e8eef4"/>',
    pig: '<path d="M4 6q6-5 11 0l1 8-6 5-6-5z" fill="#6e2c20"/>',
    man: '<path d="M8 2h5v6l-1 4v6H9v-6L8 8z" fill="#554433"/>',
    switch: '<path d="M4 9h12l2 6H2z" fill="#8a9a84"/><path d="M6 6h8v4H6z" fill="#bcc8b4"/>',
    transform: '<path d="M5 3h10v7l-5 3-5-3zM3 16l7-3 7 3" fill="#33505c" stroke="#33505c"/>',
    normal: '<path d="M11 2L9 10M3 12l8-3 6 6-8 4z" stroke="#7a4c28" stroke-width="2" fill="#7a4c28"/>',
    wave: '<path d="M2 12q3-8 7-3t9 4" stroke="#a88078" stroke-width="2" fill="none"/>',
    waves: '<path d="M2 7q3-8 7-3t9 3M2 16q3-8 7-3t9 3" stroke="#b08f88" stroke-width="2" fill="none"/>',
    merge: '<path d="M5 2l6 7-6 9" stroke="#70303c" stroke-width="2.500" fill="none"/><circle cx="12" cy="10" r="4" fill="#d8e4c8" stroke="#667"/>',
    wrangle: '<path d="M1 9l5-7 10-1 2 7-4 4 2 5-8 2-6-3 3-4z" fill="#c8b010"/><path d="M7 5l4 4M6 12l6-3" stroke="#4a4208" stroke-width="2.500" fill="none"/><path d="M11 13l6-2 1 4-6 3z" fill="#b9c8a8"/>'
  }
</script>

{#snippet icon(name, size)}
  <svg class="icon" width={size} height={size} viewBox="0 0 20 20" aria-hidden="true">{@html icons[name]}</svg>
{/snippet}

{#snippet caret()}
  <svg class="caret" width="9" height="7" viewBox="0 0 9 7" aria-hidden="true"><path d="M0 0h9l-4.500 7z" fill="currentColor" /></svg>
{/snippet}

{#snippet updown()}
  <svg class="updown" width="7" height="13" viewBox="0 0 7 13" aria-hidden="true"><path d="M0 5h7L3.500 0zM0 8h7l-3.500 5z" fill="#999" /></svg>
{/snippet}

{#snippet cross()}
  <svg class="cross" width="5" height="5" viewBox="0 0 5 5" aria-hidden="true"><path d="M0 0l5 5M5 0L0 5" stroke="#c8c8c8" stroke-width="1.500" /></svg>
{/snippet}

{#snippet grip(cols, rows)}
  <svg class="grip" width={cols * 3} height={rows * 3} aria-hidden="true">
    {#each Array(cols) as _, i}{#each Array(rows) as _, j}<rect x={i * 3} y={j * 3} width="2" height="2" fill="currentColor" />{/each}{/each}
  </svg>
{/snippet}

{#snippet shelf(tabs, tools)}
  <div class="shelf">
    <div class="shelf-tabs">
      {#each tabs as tab, i}<button class:current={i === 0}>{tab}</button>{/each}
      <button class="plus" aria-label="New shelf">✚</button>
      <button class="more" aria-label="Shelf menu">{@render caret()}</button>
    </div>
    <div class="tools" class:indent={tabs === lightTabs}>
      {#each tools as [label, name, width]}
        <button class="tool" style:width={`${width}px`}>
          {@render icon(name, 20)}
          <span class:two={twoLine.includes(name)}>{label}</span>
        </button>
      {/each}
      {#if tabs === lightTabs}<span class="scroll-right"></span>{/if}
    </div>
  </div>
{/snippet}

{#snippet paneTabs(tabs, italic)}
  <div class="pane-tabs" class:multi={tabs.length > 1}>
    {#each tabs as tab, i}
      <button class:current={i === 0} class:italic={italic && i === 0}><span>{tab}</span>{@render cross()}</button>
    {/each}
    <button class="plus" aria-label="New tab">✚</button>
    <button class="win" aria-label="Maximize pane">{@render icon('window', 13)}</button>
    <button class="more" aria-label="Pane menu">{@render caret()}</button>
  </div>
{/snippet}

{#snippet pathBar(extras)}
  <div class="path-bar">
    <button class="nav" aria-label="Back">{@render icon('left', 14)}</button>
    <button class="nav" aria-label="Forward">{@render icon('right', 14)}</button>
    <div class="path">
      {@render icon('obj', 18)}<a href="#obj">obj</a>
      <svg class="chev" width="8" height="22" viewBox="0 0 8 22" aria-hidden="true"><path d="M1 0l5 11-5 11" stroke="#111" fill="none" stroke-width="2" /></svg>
      {@render icon('geo', 18)}<a href="#day">Day_1</a>
      <button class="drop" aria-label="Path history">{@render caret()}</button>
    </div>
    <button aria-label="Pin">{@render icon('pin', 15)}</button>
    <button aria-label="Link">{@render icon('target', 17)}</button>
    {#if extras}
      <span class="space"></span>
      {#each ['cube', 'balls', 'square'] as name}
        <button class="has-menu" aria-label={name}>{@render icon(name, 16)}</button>
      {/each}
    {/if}
  </div>
{/snippet}

<svg class="defs" width="0" height="0" aria-hidden="true">
  <defs>
    <radialGradient id="ball" cx=".4" cy=".3"><stop offset="0" stop-color="#dbe3e8" /><stop offset=".6" stop-color="#98a6b0" /><stop offset="1" stop-color="#5f6b75" /></radialGradient>
    <radialGradient id="blue" cx=".4" cy=".3"><stop offset="0" stop-color="#d6e8fa" /><stop offset="1" stop-color="#3f78b5" /></radialGradient>
    <linearGradient id="tubeg"><stop offset="0" stop-color="#7f92a1" /><stop offset=".4" stop-color="#d5dfe6" /><stop offset="1" stop-color="#69798a" /></linearGradient>
    <linearGradient id="gig"><stop offset="0" stop-color="#cfe3cf" /><stop offset=".5" stop-color="#eee6e4" /><stop offset="1" stop-color="#cdb0b4" /></linearGradient>
  </defs>
</svg>

<div class="screen">
  <header class="mac-bar">
    {@render icon('apple', 16)}
    <nav>
      <button class="app">Houdini Apprentice</button>
      {#each menus as menu}<button>{menu}</button>{/each}
    </nav>
    <div class="status">
      {#each ['cc', 'drive', 'flag', 'volume', 'wifi', 'spotlight', 'control', 'siri'] as name}{@render icon(name, 17)}{/each}
      <time>Mon 20 Jun&nbsp; 8:34 pm</time>
    </div>
  </header>

  <div class="title-bar">
    <div class="lights"><i class="red"></i><i class="yellow"></i><i class="green"></i></div>
    <h1>/Users/davidcho/Desktop/Computer Graphics (Incomplete)/3D Modelling:Rendering (Blender &amp; Houdini)/Houdini/TWA Houdini Tutorials/Houdini Study Group/Joy of Vex.hipnc - Houdini Apprentice Non-Commercial 19.0.589 - Python 3</h1>
  </div>

  <div class="shelves">
    <div class="edge">▴</div>
    {@render shelf(shelfTabs, shelfTools)}
    <div class="shelf-split">{@render grip(3, 5)}</div>
    {@render shelf(lightTabs, lightTools)}
  </div>

  <main>
    <section class="left">
      {@render paneTabs(sceneTabs, false)}
      {@render pathBar(true)}
      <div class="scene">
        <div class="side-strip">▴</div>
        <div class="scene-main">
          <div class="view-bar">
            <button class="has-menu" aria-label="View state">{@render icon('viewcam', 18)}</button>
            <strong>View</strong>
            <div class="view-tools">
              {#each ['orbit', 'arrow', 'render'] as name}<button class="has-menu" aria-label={name}>{@render icon(name, 18)}</button>{/each}
              <i></i>
              <button class="on" aria-label="Select">{@render icon('flower', 18)}</button>
              <button aria-label="Box zoom">{@render icon('zoombox', 13)}</button>
              <i></i>
              <button aria-label="Stop">{@render icon('stop', 17)}</button>
              <i></i>
              <button aria-label="Snap">{@render icon('compass', 17)}</button>
              <button aria-label="Settings">{@render icon('gearbox', 16)}</button>
            </div>
            <button class="has-menu" aria-label="Layout">{@render icon('people', 16)}</button>
            <button aria-label="Help">{@render icon('help', 16)}</button>
          </div>
          <div class="scene-row">
            <div class="viewport">
              <svg class="world" viewBox="0 0 862 535" preserveAspectRatio="xMidYMid slice" role="img" aria-label="Pig head">
                <defs>
                  <linearGradient id="fog" x2="0" y2="1">
                    <stop offset="0" stop-color="#000" /><stop offset=".35" stop-color="#07080a" /><stop offset=".72" stop-color="#181b1f" />
                    <stop offset=".85" stop-color="#111417" stop-opacity=".8" /><stop offset="1" stop-color="#000" stop-opacity="0" />
                  </linearGradient>
                  <radialGradient id="flesh" r=".75"><stop offset="0" stop-color="#8e8e8e" /><stop offset=".5" stop-color="#747474" /><stop offset="1" stop-color="#444" /></radialGradient>
                  <filter id="soft" x="-5%" y="-5%" width="110%" height="110%">
                    <feTurbulence type="fractalNoise" baseFrequency=".014" numOctaves="1" seed="4" result="noise" />
                    <feDisplacementMap in="SourceGraphic" in2="noise" scale="30" xChannelSelector="R" yChannelSelector="G" />
                    <feGaussianBlur stdDeviation="3" />
                  </filter>
                </defs>
                <g stroke="#3a434c" fill="none">
                  {#each horizon as [a, b, thick]}<path d={`M0 ${a}L862 ${b}`} stroke-width={thick || 1} />{/each}
                  {#each rays as k}
                    <path d={`M0 ${8 + 445 / k}L${462 - 462 * 37 * k / 445} 45`} />
                    <path d={`M862 ${8 + 384 / k}L${462 + 400 * 37 * k / 384} 45`} />
                  {/each}
                </g>
                <rect width="862" height="62" fill="url(#fog)" />
                <g transform="translate(284 55) scale(.3333)">
                  <path d="M78 72L150 55 330 50 385 65 420 100 450 95 540 103 620 100 700 55 860 50 1000 75 940 150 935 200 905 255 860 285 805 297 818 350 805 440 850 540 905 605 955 700 985 790 985 860 890 1000 850 1030 730 1075 660 1085 605 1148 530 1150 515 1180 440 1182 215 1030 130 945 60 840 38 750 55 660 150 570 215 530 262 430 255 340 275 292 215 285 160 240 135 180 130 140Z" fill="#000" />
                  <g filter="url(#soft)">
                    {#each patches as [shade, points]}<path d={smooth(points)} fill="url(#flesh)" fill-opacity={shade / 8} stroke="#555" stroke-opacity=".5" stroke-width="4" />{/each}
                  </g>
                  <g fill="none" stroke="#000" stroke-opacity=".2" stroke-width="3">
                    {#each meshRings as r}<ellipse cx="530" cy="600" rx={r * 0.92} ry={r} />{/each}
                    {#each meshSpokes as a}<path d={`M${530 + Math.cos(a) * 50} ${600 + Math.sin(a) * 50}L${530 + Math.cos(a) * 520} ${600 + Math.sin(a) * 600}`} />{/each}
                  </g>
                  <g fill="none" stroke="#484848" stroke-width="2">
                    <path d="M80 75L250 52 340 52M420 105L460 96 540 103M625 98L720 55M860 50L1000 75 942 145 935 195M150 225Q190 290 290 290M862 287Q920 265 932 200M818 350L803 440V490M270 310Q250 370 258 440L220 520 208 700M245 620Q240 780 330 890T520 1010M270 480Q270 700 350 840M810 540Q830 660 800 745L740 890M410 690Q520 720 640 695L672 640Q660 580 620 520M350 205L320 270M700 180L735 250 790 290M730 980L815 840" />
                  </g>
                </g>
                <path d="M462 50V535" stroke="#303b45" stroke-width="2" />
                <path d="M270 274L560 278M270 396L560 400M380 211H430" stroke="#2e4a5c" opacity=".5" />
                <path d="M22 494V478" stroke="#0a4" /><path d="M22 496H40" stroke="#700" />
                <text x="22" y="479" fill="#0b0" font-size="11">y</text>
                <text x="40" y="498" fill="#800" font-size="11">x</text>
                <text x="21" y="500" fill="#22a" font-size="10">z</text>
              </svg>
              <div class="cams">
                <button>Persp {@render caret()}</button>
                <button>No cam {@render caret()}</button>
              </div>
              <p class="hint">Left mouse tumbles. Middle pans. Right dollies. Ctrl+Alt+Left box-zooms. Ctrl+Right zooms. Spacebar-Ctrl-Left tilts. Hold L for alternate tumble, dolly, and zoom. &nbsp; &nbsp; M or<br />Alt+M for First Person Navigation.</p>
              <span class="nc">Non-Commercial Edition</span>
            </div>
            <div class="display-bar">
              <div class="stow">▸</div>
              {#each viewTools as [name, on]}<button class:on class="side" aria-label={name}>{@render icon(name, 16)}</button>{/each}
              <hr />
              {#each displayTools as [name, on]}<button class:on aria-label={name}>{@render icon(name, 16)}</button>{/each}
              <span class="partial"></span>
              <button class="down" aria-label="More">{@render caret()}</button>
            </div>
          </div>
        </div>
      </div>

      <div class="split-h">{@render grip(7, 2)}</div>

      {@render paneTabs(['Geometry Spreadsheet'], false)}
      {@render pathBar(false)}
      <div class="sheet-bar">
        <strong>Node:</strong><span class="node-name">attri…</span>
        <div class="modes">
          {#each ['points', 'vert', 'prim', 'geo'] as name, i}<button class:on={i === 0} aria-label={name}>{@render icon(name, 15)}</button>{/each}
        </div>
        <label for="group-filter">Group:</label>
        <input id="group-filter" />
        <button class="filter" aria-label="Group filter">{@render icon('funnel', 13)}</button>
        <span class="select view-select">
          <select aria-label="View"><option>View</option></select><i>{@render caret()}</i>
        </span>
        <span class="select dim">
          <select aria-label="Intrinsics" disabled><option>Intrinsics</option></select><i>{@render caret()}</i>
        </span>
        <label for="attr-filter">Attributes:</label>
        <input id="attr-filter" />
        <button class="filter" aria-label="Attribute filter">{@render icon('funnel', 13)}</button>
        <button class="menu-btn" aria-label="Options">{@render icon('stack', 14)}</button>
        <button aria-label="Help">{@render icon('help', 15)}</button>
      </div>
      <div class="sheet">
        <div class="table-wrap">
          <table>
            <thead>
              <tr><th></th>{#each columns as col}<th>{col}</th>{/each}<th></th></tr>
            </thead>
            <tbody>
              {#each rows as row, i}
                <tr><th>{i}</th>{#each row as cell}<td>{cell}</td>{/each}<td></td></tr>
              {/each}
              <tr><th></th>{#each columns as _}<td></td>{/each}<td></td></tr>
            </tbody>
          </table>
          <span class="nc">Non-Commercial Edition</span>
        </div>
        <div class="scroll-v">
          <button aria-label="Scroll menu">⋯</button>
          <span></span>
          <button aria-label="Up" class="faint">▲</button>
          <button aria-label="Down">▼</button>
        </div>
      </div>
      <div class="scroll-h">{@render grip(4, 3)}<b>◀</b><b>▶</b></div>
    </section>

    <div class="split-v">{@render grip(2, 7)}</div>

    <section class="right">
      {@render paneTabs(netTabs, true)}
      {@render pathBar(false)}
      <div class="net-bar">
        <div class="side-strip">▴</div>
        {#each networkMenus as menu}<button>{menu}</button>{/each}
        <div class="net-icons">
          {#each [['tools', 'tree', 'list'], ['palette', 'dots'], ['netbox', 'note', 'picture', 'boxes'], ['search', 'eyebox']] as set}
            <div>{#each set as name}<button aria-label={name}>{@render icon(name, 15)}</button>{/each}</div>
          {/each}
        </div>
      </div>

      <div class="network">
        <svg class="graph" role="img" aria-label="Network">
          <g transform="translate(-911 -189)">
            <text class="mark" x="1091" y="220">Non-Commercial Edition</text>
            <text class="mark bold" x="1367" y="226">Geometry</text>
            <circle cx="1237" cy="542" r="26" fill="#3868a0" /><circle cx="1237" cy="542" r="17.500" fill="#9b76d0" />
            {#each dottedWires as d}<path {d} class="wire dotted" />{/each}
            {#each wires as d}<path {d} class="wire" />{/each}
            <path class="wire green" d="M1123 501Q1126 510 1134 512L1214 520Q1224 522 1225 532" />
            {#each nodes as n}
              <g transform={`translate(${n.x} ${n.y})`}>
                {#if n.kind === 'wrangle'}
                  {#each [0, 1, 2, 3] as k}<circle cx={-12 + k * 8} cy={-10 + k} r="2" fill="#b8b8b8" />{/each}
                  <circle cy="10" r="2" fill="#b8b8b8" />
                  {#if n.selected}<path d="M-20 -7Q-10 -9 0 -7T20 -8V7Q10 9 0 7T-20 7Z" fill="#d2d2d2" stroke="#ffc800" stroke-width="2" /><path d="M-18 -5Q-9 -7 0 -5T18 -6V5Q9 7 0 5T-18 5Z" fill="none" stroke="#111" />{:else}
                    <path d="M-20 -7Q-10 -8 0 -6T20 -7V6Q10 8 0 6T-20 6Z" fill="#d2d2d2" />{/if}
                  {#if n.selected}<path d="M14 -5L19 -6V6L13 7Z" fill="#18a8f0" />{/if}
                {:else if n.kind === 'merge'}
                  <path d="M-16 -9Q-12 -13 0 -13T16 -9V-8H-16Z" fill="#b4b4b4" />
                  <rect x="-20" y="-7" width="40" height="14" rx="7" fill="#d2d2d2" /><circle cy="11" r="2" fill="#b8b8b8" />
                {:else if n.kind === 'switch'}
                  <path d="M-14 -9Q-10 -13 0 -13T14 -9V-6H-14Z" fill="#b4b4b4" />
                  <path d="M-22 0Q-18 -5 -10 -6L0 -8 10 -6Q18 -5 22 0 18 5 10 6L0 9 -10 6Q-18 5 -22 0Z" fill="#b8f7a0" /><circle cy="12" r="2" fill="#b8b8b8" />
                {:else if n.kind === 'bypass'}
                  <rect x="-19.500" y="-6" width="39" height="12" rx="2" fill="#383838" stroke="#777" /><path d="M-18 -5h4l-1 10h-4z" fill="#e8c800" />
                  <circle cy="-9" r="2" fill="#6a6a6a" /><circle cy="9" r="2" fill="#6a6a6a" />
                {:else}
                  <rect x="-20" y="-6" width="40" height="13" rx="2" fill={n.fill || '#d2d2d2'} />
                  {#if !n.noIn}<circle cy="-9" r="2" fill="#b8b8b8" />{/if}
                  <circle cy="10" r="2" fill="#b8b8b8" />
                {/if}
                <path d="M-13 -5l-2 10M-8 -5l-2 10M10 -5l-2 10M15 -5l-2 10" stroke={n.kind === 'bypass' ? '#777' : '#444'} stroke-opacity=".6" />
                <svg x="-5" y="-5" width="10" height="10" viewBox="0 0 20 20">{@html icons[n.icon || n.kind]}</svg>
                <text class="label" class:faded={n.kind === 'bypass'} x={n.kind === 'switch' ? 25 : 23} y="3">{n.name}</text>
                {#if n.lock || n.kind === 'wrangle'}
                  <path d="M27 8v-1q1-2 2 0v1" stroke="#5d6a60" fill="none" /><rect x="26" y="8" width="5" height="4" fill="#5d6a60" />
                {/if}
              </g>
            {/each}
          </g>
        </svg>

        <aside class="params">
          <div class="param-head">
            <button class="has-menu" aria-label="Operator">{@render icon('hat', 18)}</button>
            <label for="op-name">Attribute Wrangle</label>
            <input id="op-name" value="attribwrangle8" />
            <button class="has-menu" aria-label="Gear">{@render icon('gear', 15)}</button>
            <button class="has-menu" aria-label="Houdini">{@render icon('hlogo', 15)}</button>
            <button aria-label="Search">{@render icon('search', 15)}</button>
            <button aria-label="Info">{@render icon('info', 15)}</button>
            <button aria-label="Help">{@render icon('help', 15)}</button>
          </div>
          <div class="param-tabs"><button class="current">Code</button><button>Bindings</button></div>
          <div class="row group-row">
            <label for="group">Group</label>
            <input id="group" />
            <button class="drop-btn" aria-label="Group menu">{@render caret()}</button>
            <button aria-label="Pick">{@render icon('cursor', 18)}</button>
          </div>
          <div class="row">
            <label for="gtype">Group Type</label>
            <span class="select wide"><select id="gtype"><option>Guess from Group</option></select><i>{@render updown()}</i></span>
          </div>
          <div class="row">
            <label for="over">Run Over</label>
            <span class="select wide"><select id="over"><option>Points</option></select><i>{@render updown()}</i></span>
          </div>
          <div class="vex-label" id="vex">VEXpression</div>
          <div class="vex">
            <div class="editor">
              <div class="gutter">1</div>
              <pre role="textbox" aria-labelledby="vex" tabindex="0"><b class="var">@Cd</b> <b>=</b>  <b class="fn">sin</b> <b>(</b><b class="type">float</b><b>(</b><b class="var">@N</b><b>/</b><b class="fn">ch</b><b>(</b><b class="str">"SCALE"</b><b>)));</b></pre>
              <div class="ed-scroll"><span>{@render grip(3, 4)}</span><i>△</i><i>▽</i></div>
              <div class="ed-hscroll">{@render grip(4, 3)}<i>◀</i><i>▶</i></div>
              <div class="ed-status"><span></span><span>Ln 1, Col 21</span></div>
            </div>
            <div class="vex-side">
              <button class="drop-btn" aria-label="Snippets">{@render caret()}</button>
              <button aria-label="Create parameters">{@render icon('sliders', 16)}</button>
            </div>
          </div>
          <div class="row attrs">
            <label for="attrs">Attributes to Create</label>
            <input id="attrs" value="*" />
          </div>
          <div class="row check">
            <input type="checkbox" id="enforce" /><label for="enforce">Enforce Prototypes</label>
          </div>
          <div class="row scale">
            <label for="scale">Scale</label>
            <input id="scale" value="0.051" />
            <input type="range" aria-label="Scale slider" min="0" max="1" step="0.001" value="0.030" />
          </div>
        </aside>
      </div>
    </section>
  </main>

  <footer class="playbar">
    <div class="edge">▾</div>
    <div class="transport">
      <div class="line">
        <div class="btns">
          {#each ['first', 'rev', 'stopbtn', 'play', 'last'] as name}<button class:on={name === 'stopbtn'} aria-label={name}>{@render icon(name, 18)}</button>{/each}
        </div>
        <input aria-label="Frame" value="1" />
        <div class="btns small">
          {#each ['stepb', 'stepf'] as name}<button aria-label={name}>{@render icon(name, 9)}</button>{/each}
        </div>
      </div>
      <div class="line second">
        <div class="btns">
          {#each ['panel', 'speaker', 'loop', 'clock'] as name}<button aria-label={name}>{@render icon(name, 18)}</button>{/each}
        </div>
        <div class="btns tiny">
          {#each ['prevkey', 'nextkey'] as name}<button aria-label={name}>{@render icon(name, 12)}</button>{/each}
        </div>
      </div>
    </div>
    <div class="time">
      <svg class="ruler" aria-hidden="true">
        <path d="M0 21.500H3000" stroke="#999" stroke-width="1" />
        {#each ticks as f}
          <line x1={framePos(f)} x2={framePos(f)} y1={f % 24 ? 16 : 13} y2={f % 24 ? 25 : 28} stroke={f % 24 ? '#777' : '#aaa'} />
          {#if f % 24 === 0}<text x={framePos(f)} y="8">{f === 240 ? '2' : f}</text>{/if}
        {/each}
        <path d="M0 0H24V18H6L0 23Z" fill="#0a0a0a" stroke="#ddd" stroke-width="1.500" transform="translate(1 1)" />
        <text class="now" x="9" y="14">1</text>
      </svg>
      <div class="range">
        <input class="dim" aria-label="Global start" value="1" /><input aria-label="Start" value="1" />
        <div class="range-bar"><svg width="6" height="10"><path d="M0 0l6 5-6 5z" fill="#999" /></svg><i></i><svg width="6" height="10"><path d="M6 0L0 5l6 5z" fill="#bbb" /></svg></div>
        <input aria-label="End" value="240" /><input class="dim" aria-label="Global end" value="240" />
      </div>
    </div>
    <div class="keying"><button class="key" aria-label="Set key">{@render icon('key', 18)}</button><button class="key-menu" aria-label="Key options">{@render caret()}</button></div>
    <div class="key-icons"><button aria-label="Scope">{@render icon('keyset', 16)}</button><button aria-label="Curves">{@render icon('wavebox', 16)}</button></div>
    <div class="channels">
      <button>0 keys, 0/0 channels <span>▲</span></button>
      <span class="select"><select aria-label="Key mode"><option>Key All Channels</option></select><i>{@render updown()}</i></span>
    </div>
  </footer>

  <div class="status-bar">
    <p>Undid: Parameter Change; Next: Change selection</p>
    <div class="update">
      {@render icon('brain', 18)}{@render icon('refresh', 16)}
      <span class="select"><select aria-label="Update mode"><option>Auto Update</option></select><i>{@render updown()}</i></span>
    </div>
  </div>
</div>

<style>
  :global(body) {
    background: #000;
    overflow: hidden;
  }

  .screen, .screen :global(*) {
    box-sizing: border-box;
  }

  .defs {
    position: absolute;
  }

  .screen {
    display: flex;
    flex-direction: column;
    height: 100vh;
    color: #bdbdbd;
    background: #000;
    font-family: 'Noto Sans CJK SC', 'Noto Sans', sans-serif;
    font-size: 11px;
    line-height: 16px;
  }

  button, input, select {
    font: inherit;
    color: inherit;
    margin: 0;
    padding: 0;
    border: 0;
    background: none;
    border-radius: 0;
    outline: none;
  }

  button {
    display: flex;
    align-items: center;
    justify-content: center;
    position: relative;
    white-space: nowrap;
    flex: none;
  }

  input {
    background: #131313;
    border: 1px solid #222;
    border-top-color: #1c1c1c;
    min-width: 0;
  }

  a {
    color: inherit;
    text-decoration: none;
  }

  .icon, .caret, .updown, .grip, .cross {
    display: block;
    flex: none;
  }

  .has-menu::after {
    content: '';
    position: absolute;
    right: -3px;
    bottom: -2px;
    border: 3px solid transparent;
    border-top: 4px solid #888;
    border-bottom: 0;
  }

  .on {
    background: #5679a0;
  }

  /* system menu bar */
  .mac-bar {
    height: 25px;
    flex: none;
    display: flex;
    align-items: center;
    padding: 0 18px 2px;
    background: #000;
    color: #f0f0f0;
    font-family: Inter, sans-serif;
    font-size: 13px;
  }

  .mac-bar nav {
    display: flex;
    gap: 20px;
    margin-left: 20px;
  }

  .mac-bar .app {
    font-weight: 700;
  }

  .status {
    display: flex;
    align-items: center;
    gap: 18px;
    margin-left: auto;
  }

  .status time {
    margin-left: -6px;
  }

  .title-bar {
    height: 28px;
    flex: none;
    display: flex;
    align-items: center;
    background: #373737;
    border-top: 1px solid #6a6a6a;
    border-radius: 9px 9px 0 0;
    padding: 0 8px 2px;
  }

  .lights {
    display: flex;
    gap: 8px;
  }

  .lights i {
    width: 12px;
    height: 12px;
    border-radius: 50%;
  }

  .red { background: #ff5f57; }
  .yellow { background: #febc2e; }
  .green { background: #28c840; }

  h1 {
    flex: 1;
    margin: 0 52px 0 0;
    text-align: center;
    font-family: Inter, sans-serif;
    font-size: 13px;
    font-weight: 700;
    color: #acacac;
    white-space: nowrap;
  }

  /* shelves */
  .shelves {
    height: 58px;
    flex: none;
    display: flex;
    border-top: 1px solid #000;
    border-bottom: 1px solid #000;
    background: #3d3d3d;
  }

  .edge {
    width: 9px;
    flex: none;
    background: #3c3c3c;
    border-left: 2px solid #4c4c4c;
    border-right: 1px solid #000;
    font-size: 9px;
    line-height: 9px;
    color: #000;
  }

  .shelf {
    min-width: 0;
    flex: 955 1 0;
    overflow: hidden;
  }

  .shelf:last-child {
    flex-grow: 945;
  }

  .shelf-tabs {
    display: flex;
    height: 17px;
    background: #303030;
    font-size: 9px;
    border-bottom: 1px solid #555;
  }

  .shelf-tabs button {
    padding: 0 6px;
    border-right: 1px solid #000;
    border-bottom: 1px solid #000;
    height: 17px;
    color: #b0b0b0;
    background: #333;
  }

  .shelf-tabs button.current {
    background: #4b4b4b;
    border-bottom: 0;
    padding: 0 8px 0 7px;
  }

  .shelf-tabs .plus, .shelf-tabs .more {
    background: none;
    border: 0;
    color: #e0e0e0;
    padding: 0 8px;
  }

  .shelf-tabs .more, .pane-tabs .more {
    margin-left: auto;
  }

  .plus {
    font-family: 'DejaVu Sans', sans-serif;
    font-size: 11px;
  }

  .tools {
    display: flex;
    height: 40px;
    background: linear-gradient(#4b4b4b, #3a3a3a);
    position: relative;
  }

  .indent {
    padding-left: 14px;
  }

  .tool {
    flex-direction: column;
    justify-content: flex-start;
    padding-top: 2px;
    font-size: 9px;
    line-height: 14px;
    color: #bababa;
  }

  .tool .two {
    white-space: normal;
    text-align: center;
    line-height: 9px;
    width: min-content;
    margin-top: -2px;
  }

  .scroll-right {
    position: absolute;
    right: 0;
    top: 0;
    width: 16px;
    height: 40px;
    background: #424242;
  }

  .scroll-right::after {
    content: '';
    position: absolute;
    left: 2px;
    top: 14px;
    border: 5px solid transparent;
    border-left: 7px solid #888;
    border-right: 0;
  }

  .shelf-split {
    width: 11px;
    flex: none;
    display: flex;
    align-items: center;
    justify-content: center;
    border: solid #000;
    border-width: 0 1px;
    background: #444;
    color: #111;
  }

  /* panes */
  main {
    flex: 1;
    min-height: 0;
    display: grid;
    grid-template-columns: minmax(0, 897fr) 7px minmax(0, 1009fr);
    padding-left: 7px;
    background: linear-gradient(90deg, #333 2px, #4a4a4a 2px, #4a4a4a 6px, #222 6px, #222 7px, #3a3a3a 7px);
  }

  .left, .right {
    display: flex;
    flex-direction: column;
    min-width: 0;
    min-height: 0;
    background: #393939;
  }

  .split-v {
    background: #494949;
    border: solid #111;
    border-width: 0 1px;
    display: flex;
    align-items: center;
    justify-content: center;
    color: #777;
  }

  .split-h {
    height: 6px;
    flex: none;
    display: flex;
    align-items: center;
    justify-content: center;
    border-top: 1px solid #888;
    background: #494949;
    color: #777;
  }

  .pane-tabs {
    display: flex;
    height: 19px;
    flex: none;
    background: #2f2f2f;
    border-bottom: 1px solid #222;
    color: #b4b4b4;
  }

  .pane-tabs button {
    padding: 0 6px 0 5px;
    gap: 10px;
    background: #2f2f2f;
    border-right: 2px solid #202020;
    height: 18px;
    font-size: 10px;
  }

  .pane-tabs .current {
    background: #494949;
    height: 19px;
    padding-left: 6px;
  }

  .multi .current {
    gap: 12px;
    padding-right: 8px;
  }

  .pane-tabs:not(.multi) .current {
    gap: 7px;
    padding-right: 5px;
  }

  .pane-tabs .italic {
    font-style: italic;
  }

  .pane-tabs .plus, .pane-tabs .win, .pane-tabs .more {
    background: none;
    border: 0;
    color: #e0e0e0;
  }

  .pane-tabs .plus {
    font-size: 12px;
    padding-left: 5px;
  }

  .pane-tabs .win {
    margin-left: auto;
    padding-right: 0;
  }

  .pane-tabs .more {
    margin-left: 0;
    padding: 0 6px 0 9px;
  }

  .pane-tabs .more :global(svg), .shelf-tabs .more :global(svg) {
    width: 7px;
  }

  .path-bar {
    height: 34px;
    flex: none;
    display: flex;
    align-items: center;
    gap: 7px;
    padding: 0 5px 1px;
    background: linear-gradient(#484848, #383838);
    border-bottom: 1px solid #000;
  }

  .nav {
    width: 17px;
  }

  .path {
    flex: 1;
    height: 24px;
    display: flex;
    align-items: center;
    border: 1px solid #000;
    border-top-color: #111;
    background: #3c3c3c;
    padding-left: 6px;
    color: #d0d0d0;
    gap: 4px;
    min-width: 0;
    margin: 0 2px 0 0;
  }

  .chev {
    margin: 0 1px;
  }

  .path .drop {
    margin-left: auto;
    width: 19px;
    height: 22px;
    color: #777;
    background: linear-gradient(#484848, #333);
  }

  .space {
    width: 4px;
  }

  .scene {
    flex: 1;
    min-height: 0;
    display: flex;
  }

  .side-strip {
    width: 9px;
    flex: none;
    background: #464646;
    border-right: 1px solid #111;
    color: #000;
    font-size: 9px;
    line-height: 9px;
  }

  .scene-main {
    flex: 1;
    min-width: 0;
    display: flex;
    flex-direction: column;
  }

  .view-bar {
    height: 31px;
    flex: none;
    display: flex;
    align-items: center;
    background: #2f2f2f;
    border-top: 2px solid #555;
    border-bottom: 1px solid #000;
    padding: 0 6px 0 4px;
    gap: 10px;
  }

  .view-bar strong {
    margin-left: -4px;
    color: #ccc;
  }

  .view-tools {
    flex: 1;
    display: flex;
    justify-content: center;
    align-items: center;
    gap: 13px;
    padding-left: 4px;
  }

  .view-tools i {
    width: 1px;
    height: 24px;
    margin: 0 -6px;
    background: #555;
  }

  .view-tools .on {
    padding: 2px 1px;
  }

  .scene-row {
    flex: 1;
    min-height: 0;
    display: flex;
  }

  .viewport {
    flex: 1;
    min-width: 0;
    position: relative;
    background: #000;
    overflow: hidden;
  }

  .world {
    position: absolute;
    width: 100%;
    height: 100%;
  }

  .cams {
    position: absolute;
    top: 6px;
    right: 6px;
    display: flex;
    gap: 7px;
    color: #b4b4b4;
  }

  .cams button {
    height: 20px;
    padding: 0 6px 2px;
    gap: 3px;
    border: 1px solid #999;
    border-radius: 10px;
    background: #101010;
  }

  .cams :global(svg) {
    width: 7px;
    height: 4px;
  }

  .hint {
    position: absolute;
    left: 9px;
    bottom: 8px;
    margin: 0;
    font-family: Roboto, 'Noto Sans', sans-serif;
    font-size: 11px;
    line-height: 15px;
    color: #c6c6c6;
    white-space: nowrap;
  }

  .viewport .nc {
    position: absolute;
    right: 12px;
    bottom: 9px;
    color: #4a4600;
    font-size: 11px;
    line-height: 15px;
  }

  .display-bar {
    width: 26px;
    flex: none;
    display: flex;
    flex-direction: column;
    align-items: center;
    background: #373737;
    border-right: 1px solid #111;
    overflow: hidden;
  }

  .stow {
    width: 100%;
    height: 9px;
    margin: 1px 0 20px;
    flex: none;
    background: #484848;
    text-align: right;
    font-size: 9px;
    line-height: 9px;
    color: #000;
  }

  .display-bar button {
    width: 23px;
    height: 25px;
  }

  .display-bar .on {
    background: linear-gradient(#4d6f93, #6a8fb4) content-box;
    padding: 1px 0;
  }

  .display-bar .side::after {
    content: '';
    position: absolute;
    right: 0;
    bottom: 2px;
    border: 3px solid transparent;
    border-left: 4px solid #777;
    border-right: 0;
  }

  .display-bar hr {
    width: 22px;
    margin: 0 0 2px;
    border: 0;
    border-top: 1px solid #666;
    flex: none;
  }

  .partial {
    width: 21px;
    height: 5px;
    margin-top: 1px;
    background: #4a6a8a;
    flex: none;
  }

  .display-bar .down {
    height: 16px;
    color: #888;
  }

  /* spreadsheet */
  .sheet-bar {
    height: 29px;
    flex: none;
    display: flex;
    align-items: center;
    background: #303030;
    border-top: 2px solid #555;
    border-bottom: 1px solid #000;
    padding: 0 6px;
    gap: 3px;
    color: #c4c4c4;
  }

  .node-name {
    flex: none;
    width: 70px;
    overflow: hidden;
  }

  .sheet-bar strong {
    color: #ccc;
  }

  .modes {
    display: flex;
  }

  .modes button {
    width: 20px;
    height: 20px;
    border-right: 1px solid #111;
  }

  .modes button:not(.on) {
    background: linear-gradient(#555, #3b3b3b);
  }

  .modes .on {
    background: #6087b0;
  }

  .sheet-bar input {
    flex: 1;
    height: 21px;
  }

  .filter, .menu-btn {
    width: 20px;
    height: 20px;
    border: 1px solid #000;
    background: #303030;
  }

  .menu-btn {
    width: 18px;
    margin: 0 3px 0 2px;
    border-color: #555;
  }

  .select {
    display: flex;
    height: 21px;
    border: 1px solid #1c1c1c;
    background: linear-gradient(#565656, #404040);
    position: relative;
    flex: none;
  }

  .select select {
    appearance: none;
    flex: 1;
    padding: 0 0 0 13px;
    min-width: 0;
    opacity: 1;
  }

  .select i {
    width: 22px;
    display: flex;
    align-items: center;
    justify-content: center;
    background: linear-gradient(#3c3c3c, #2c2c2c);
    pointer-events: none;
    color: #999;
  }

  .view-select {
    width: 106px;
    margin: 0 1px 0 2px;
  }

  .dim {
    width: 128px;
    background: #2c2c2c;
    color: #808080;
  }

  .dim i {
    background: none;
    color: #555;
  }

  .sheet {
    height: 149px;
    flex: none;
    display: flex;
    background: #222;
  }

  .table-wrap {
    flex: 1;
    min-width: 0;
    overflow: hidden;
    position: relative;
    border-left: 2px solid #000;
    border-bottom: 1px solid #555;
  }

  table {
    width: 100%;
    border-collapse: separate;
    border-spacing: 0;
    table-layout: fixed;
  }

  th {
    text-align: left;
    font-weight: 400;
    height: 18px;
    line-height: 14px;
    padding: 0 4px 1px;
    background: linear-gradient(#3c3c3c, #262626);
    border-right: 1px solid #0c0c0c;
    border-bottom: 1px solid #0c0c0c;
    color: #b8b8b8;
  }

  th:last-child, td:last-child {
    width: 29px;
  }

  td {
    height: 18px;
    line-height: 16px;
    padding: 0 3px;
    font-family: 'Liberation Mono', monospace;
    font-size: 12px;
    border-right: 1px solid #1c1c1c;
    color: #bcbcbc;
    background: #303030;
  }

  tr:nth-child(even) td {
    background: #3b3b3b;
  }

  .table-wrap .nc {
    position: absolute;
    right: 6px;
    bottom: -1px;
    color: #ddd;
    text-shadow: 1px 1px 1px #000;
  }

  .scroll-v {
    width: 16px;
    flex: none;
    display: flex;
    flex-direction: column;
    background: #222;
    border-left: 1px solid #444;
    font-size: 9px;
  }

  .scroll-v span {
    flex: 1;
    border-bottom: 1px solid #000;
  }

  .scroll-v button {
    height: 16px;
    background: #404040;
    color: #888;
    font-family: 'DejaVu Sans', sans-serif;
  }

  .scroll-v .faint {
    background: #303030;
    color: #484848;
    border-bottom: 1px solid #222;
  }

  .scroll-h {
    height: 16px;
    flex: none;
    display: flex;
    align-items: center;
    background: #343434;
    color: #111;
    padding-right: 16px;
    gap: 8px;
    font-family: 'DejaVu Sans', sans-serif;
    font-size: 8px;
  }

  .scroll-h b {
    color: #484848;
  }

  .scroll-h :global(.grip) {
    margin: 0 auto;
  }

  /* network editor */
  .net-bar {
    height: 25px;
    flex: none;
    display: flex;
    align-items: center;
    border-top: 1px solid #555;
    border-bottom: 1px solid #000;
    gap: 16px;
    padding-bottom: 2px;
    color: #cacaca;
    background: linear-gradient(#404040, #333);
  }

  .net-bar .side-strip {
    height: 100%;
    margin-right: -6px;
  }

  .net-icons {
    margin-left: auto;
    display: flex;
    gap: 26px;
    padding-right: 5px;
  }

  .net-icons div {
    display: flex;
    gap: 9px;
  }

  .network {
    flex: 1;
    min-height: 0;
    position: relative;
    background: #303030;
    overflow: hidden;
  }

  .graph {
    position: absolute;
    width: 100%;
    height: 100%;
  }

  .mark {
    font-size: 19px;
    fill: #454545;
  }

  .mark.bold {
    font-size: 23px;
    font-weight: 700;
    fill: #505050;
  }

  .wire {
    fill: none;
    stroke: #4a86c4;
    stroke-width: 1.2;
  }

  .wire.green {
    stroke: #8fae5c;
  }

  .dotted {
    stroke-dasharray: 2 2;
  }

  .label {
    font-size: 9px;
    fill: #acacac;
  }

  .label.faded {
    fill: #5e5e5e;
  }

  .params {
    position: absolute;
    top: 0;
    right: 2px;
    width: 422px;
    background: #3c3c3c;
    padding-left: 2px;
    color: #c0c0c0;
  }

  .param-head {
    height: 27px;
    display: flex;
    align-items: center;
    gap: 9px;
    border-bottom: 1px solid #000;
    padding: 0 5px 0 4px;
  }

  .param-head label {
    font-weight: 700;
    margin: 0 -6px 0 -6px;
    white-space: nowrap;
  }

  .param-head input {
    flex: 1;
    height: 22px;
    padding: 0 3px;
    font-family: 'DejaVu Sans Mono', monospace;
    font-size: 12px;
    color: #d8d8d8;
  }

  .param-tabs {
    display: flex;
    align-items: flex-end;
    height: 26px;
    border-bottom: 1px solid #5a5a5a;
  }

  .param-tabs button {
    height: 22px;
    padding: 0 6px 2px;
    border: 1px solid #222;
    border-bottom: 0;
    background: linear-gradient(#555, #3a3a3a);
  }

  .param-tabs .current {
    background: #505050;
    font-weight: 700;
  }

  .row {
    display: flex;
    align-items: center;
    height: 26px;
    gap: 1px;
  }

  .row > label {
    width: 137px;
    margin-right: 14px;
    text-align: right;
    flex: none;
  }

  .group-row {
    margin-top: 4px;
  }

  .row > input {
    height: 23px;
    width: 213px;
    padding: 0 4px;
    font-family: 'DejaVu Sans Mono', monospace;
    font-size: 12px;
    color: #ddd;
  }

  .drop-btn {
    width: 19px;
    height: 20px;
    border: 1px solid #222;
    background: linear-gradient(#454545, #333);
    color: #888;
  }

  .drop-btn :global(svg) {
    width: 6px;
    height: 6px;
  }

  .group-row button:last-child {
    margin-left: 4px;
  }

  .wide {
    width: 137px;
  }

  .wide select {
    padding-bottom: 2px;
  }

  .vex-label {
    margin-left: 18px;
    line-height: 18px;
    padding-bottom: 2px;
  }

  .vex {
    display: flex;
    padding-left: 15px;
    gap: 1px;
  }

  .editor {
    width: 372px;
    display: grid;
    grid-template-columns: 29px 1fr 14px;
    grid-template-rows: 122px 15px 22px;
    background: #363636;
    border-top: 1px solid #222;
  }

  .gutter {
    background: #2c2c2c;
    text-align: right;
    padding: 1px 3px;
    font-family: 'DejaVu Sans Mono', monospace;
    font-size: 12px;
  }

  pre {
    margin: 0;
    padding: 1px 4px;
    background: #121212;
    color: #ececec;
    font-family: 'DejaVu Sans Mono', monospace;
    font-size: 12px;
  }

  pre .var { color: #f0a860; }
  pre .fn { color: #34cccc; }
  pre .type { color: #f070e8; }
  pre .str { color: #34d058; }

  .ed-scroll {
    display: flex;
    flex-direction: column;
    align-items: center;
    color: #151515;
    font-size: 8px;
  }

  .ed-scroll span {
    flex: 1;
    display: flex;
    align-items: center;
  }

  .ed-scroll i, .ed-hscroll i {
    font-style: normal;
    color: #505050;
    font-family: 'DejaVu Sans', sans-serif;
  }

  .ed-hscroll {
    grid-column: 1 / -1;
    display: flex;
    align-items: center;
    color: #151515;
    gap: 10px;
    padding-right: 20px;
    font-size: 8px;
  }

  .ed-hscroll :global(.grip) {
    margin: 0 auto;
  }

  .ed-status {
    grid-column: 1 / -1;
    display: grid;
    grid-template-columns: 1fr 105px;
    border: 2px solid #ccc;
    border-left-width: 1px;
    background: #3a3a3a;
    line-height: 17px;
    text-align: center;
  }

  .ed-status span + span {
    border-left: 2px solid #aaa;
  }

  .vex-side {
    display: flex;
    flex-direction: column;
    align-items: center;
    gap: 6px;
    padding-top: 4px;
  }

  .row.attrs {
    margin-top: 17px;
  }

  .row.attrs input {
    width: 260px;
  }

  .row.check {
    height: 20px;
    padding-left: 152px;
  }

  .row.check label {
    width: auto;
    margin: 0 0 0 6px;
  }

  .row.check input {
    appearance: none;
    width: 14px;
    height: 14px;
  }

  .row.scale {
    height: 26px;
    margin-top: 7px;
  }

  .scale > input {
    width: 74px;
    font-weight: 700;
  }

  .scale > input[type='range'] {
    appearance: none;
    width: 178px;
    margin-left: 5px;
    padding: 0;
    border: 0;
    background: linear-gradient(90deg, #1a5aa8 6px, #000 6px) no-repeat center / 100% 4px;
  }

  .scale > input[type='range']::-webkit-slider-thumb {
    appearance: none;
    width: 6px;
    height: 20px;
    border: 1px solid #000;
    background: linear-gradient(90deg, #bbb, #777);
  }

  /* playbar */
  .playbar {
    height: 70px;
    flex: none;
    display: flex;
    background: #2f2f2f;
    border-top: 1px solid #666;
    border-bottom: 1px solid #000;
    padding-right: 6px;
  }

  .playbar .edge {
    display: flex;
    align-items: flex-end;
    margin-left: 2px;
  }

  .transport {
    display: flex;
    flex-direction: column;
    gap: 7px;
    padding: 7px 4px 0 4px;
  }

  .line, .btns {
    display: flex;
  }

  .line {
    gap: 3px;
  }

  .btns button {
    width: 27px;
    height: 28px;
    border: 1px solid #151515;
    border-left-color: #666;
    background: linear-gradient(#555, #3a3a3a);
  }

  .btns button.on {
    background: #5b83ab;
  }

  .line input {
    width: 46px;
    padding: 0 3px;
    color: #ddd;
    font-family: 'DejaVu Sans Mono', monospace;
  }

  .small button {
    width: 14px;
  }

  .second button {
    height: 24px;
  }

  .tiny button {
    width: 23px;
    background: #383838;
    border-color: #222;
  }

  .time {
    flex: 1;
    min-width: 0;
  }

  .ruler {
    display: block;
    width: 100%;
    height: 43px;
    overflow: hidden;
  }

  .ruler text {
    font-size: 9px;
    fill: #989898;
  }

  .ruler .now {
    font-size: 12px;
    fill: #eee;
  }

  .range {
    display: flex;
    align-items: center;
    gap: 3px;
  }

  .range input {
    width: 42px;
    height: 21px;
    padding: 0 3px;
    color: #ddd;
    font-family: 'DejaVu Sans Mono', monospace;
  }

  .range input.dim {
    background: #262626;
  }

  .range-bar {
    flex: 1;
    display: flex;
    align-items: center;
  }

  .range-bar i {
    flex: 1;
    height: 3px;
    background: #777;
  }

  .keying {
    display: flex;
    align-items: center;
    padding: 0 8px 0 3px;
  }

  .key {
    width: 40px;
    height: 40px;
    border-radius: 50%;
    border: 1px solid #1a1a1a;
    background: linear-gradient(#3c3c3c 80%, #262626 80%);
  }

  .key-menu {
    width: 15px;
    height: 21px;
    margin-left: -1px;
    border: 1px solid #222;
    background: #3c3c3c;
    color: #888;
  }

  .key-menu :global(svg) {
    width: 6px;
  }

  .key-icons, .channels {
    display: flex;
    flex-direction: column;
    gap: 4px;
    padding-top: 7px;
  }

  .key-icons {
    margin-right: 5px;
  }

  .key-icons button {
    width: 23px;
    height: 25px;
    border: 1px solid #111;
    background: #4a4a4a;
  }

  .channels {
    width: 154px;
  }

  .channels button {
    height: 25px;
    border: 1px solid #111;
    background: linear-gradient(#555, #404040);
    gap: 20px;
    padding: 0 0 2px 8px;
  }

  .channels button span {
    font-family: 'DejaVu Sans', sans-serif;
    font-size: 9px;
    color: #999;
  }

  .status-bar {
    height: 26px;
    flex: none;
    display: flex;
    align-items: center;
    justify-content: space-between;
    background: #1a1a1a;
    border-bottom: 1px solid #444;
    border-radius: 0 0 9px 9px;
  }

  .status-bar p {
    margin: 0 3px;
    padding-bottom: 2px;
    color: #c8c8c8;
  }

  .update {
    height: 25px;
    display: flex;
    align-items: center;
    gap: 10px;
    padding: 0 23px 0 5px;
    background: #333;
  }

  .update .select {
    width: 117px;
    height: 25px;
    margin-left: -3px;
  }

  .update select {
    padding: 0 0 2px 16px;
  }
</style>
